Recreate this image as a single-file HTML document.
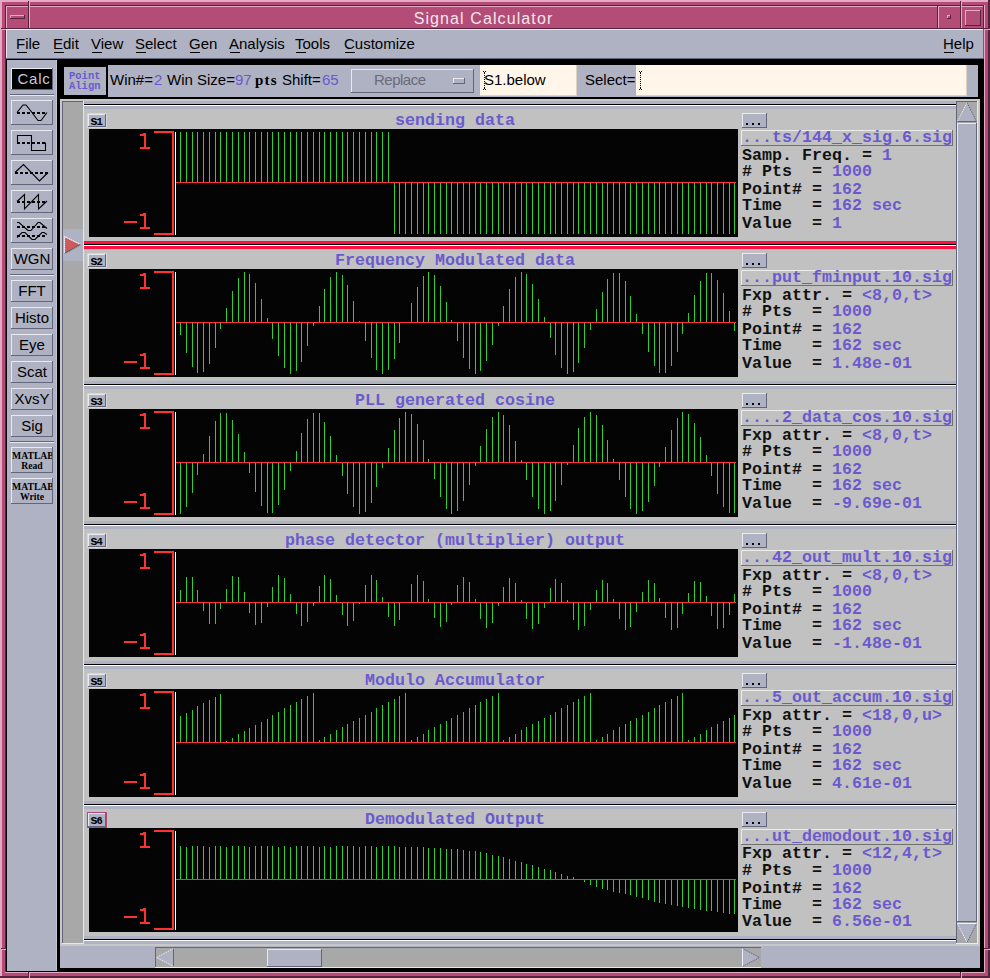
<!DOCTYPE html><html><head><meta charset="utf-8"><style>
html,body{margin:0;padding:0;width:990px;height:978px;overflow:hidden;background:#000}
div,span,svg{position:absolute;box-sizing:border-box}
span{white-space:pre;line-height:1}
</style></head><body>
<div style="left:0px;top:0px;width:990px;height:978px;background:#b34c77;"></div>
<div style="left:0px;top:0px;width:990px;height:2px;background:#e4aac4;"></div>
<div style="left:0px;top:0px;width:2px;height:978px;background:#e4aac4;"></div>
<div style="left:988px;top:0px;width:2px;height:978px;background:#55233b;"></div>
<div style="left:0px;top:976px;width:990px;height:2px;background:#55233b;"></div>
<div style="left:1px;top:976px;width:989px;height:2px;background:#55233b;"></div>
<div style="left:5px;top:5px;width:980px;height:1px;background:#55233b;"></div>
<div style="left:5px;top:5px;width:1px;height:968px;background:#55233b;"></div>
<div style="left:984px;top:5px;width:1px;height:968px;background:#e4aac4;"></div>
<div style="left:5px;top:972px;width:980px;height:1px;background:#e4aac4;"></div>
<div style="left:28px;top:1px;width:1px;height:5px;background:#55233b;"></div>
<div style="left:29px;top:0px;width:1px;height:6px;background:#e4aac4;"></div>
<div style="left:28px;top:972px;width:1px;height:5px;background:#55233b;"></div>
<div style="left:29px;top:972px;width:1px;height:6px;background:#e4aac4;"></div>
<div style="left:960px;top:1px;width:1px;height:5px;background:#55233b;"></div>
<div style="left:961px;top:0px;width:1px;height:6px;background:#e4aac4;"></div>
<div style="left:960px;top:972px;width:1px;height:5px;background:#55233b;"></div>
<div style="left:961px;top:972px;width:1px;height:6px;background:#e4aac4;"></div>
<div style="left:1px;top:28px;width:5px;height:1px;background:#55233b;"></div>
<div style="left:0px;top:29px;width:6px;height:1px;background:#e4aac4;"></div>
<div style="left:984px;top:28px;width:5px;height:1px;background:#55233b;"></div>
<div style="left:984px;top:29px;width:6px;height:1px;background:#e4aac4;"></div>
<div style="left:1px;top:948px;width:5px;height:1px;background:#55233b;"></div>
<div style="left:0px;top:949px;width:6px;height:1px;background:#e4aac4;"></div>
<div style="left:984px;top:948px;width:5px;height:1px;background:#55233b;"></div>
<div style="left:984px;top:949px;width:6px;height:1px;background:#e4aac4;"></div>
<div style="left:6px;top:6px;width:978px;height:966px;background:#000;"></div>
<div style="left:6px;top:6px;width:978px;height:23px;background:#b34c77;"></div>
<div style="left:6px;top:6px;width:23px;height:1px;background:#e4aac4;"></div>
<div style="left:6px;top:6px;width:1px;height:23px;background:#e4aac4;"></div>
<div style="left:6px;top:28px;width:23px;height:1px;background:#55233b;"></div>
<div style="left:28px;top:6px;width:1px;height:23px;background:#55233b;"></div>
<div style="left:29px;top:6px;width:909px;height:1px;background:#e4aac4;"></div>
<div style="left:29px;top:6px;width:1px;height:23px;background:#e4aac4;"></div>
<div style="left:29px;top:28px;width:909px;height:1px;background:#55233b;"></div>
<div style="left:937px;top:6px;width:1px;height:23px;background:#55233b;"></div>
<div style="left:938px;top:6px;width:23px;height:1px;background:#e4aac4;"></div>
<div style="left:938px;top:6px;width:1px;height:23px;background:#e4aac4;"></div>
<div style="left:938px;top:28px;width:23px;height:1px;background:#55233b;"></div>
<div style="left:960px;top:6px;width:1px;height:23px;background:#55233b;"></div>
<div style="left:961px;top:6px;width:23px;height:1px;background:#e4aac4;"></div>
<div style="left:961px;top:6px;width:1px;height:23px;background:#e4aac4;"></div>
<div style="left:961px;top:28px;width:23px;height:1px;background:#55233b;"></div>
<div style="left:983px;top:6px;width:1px;height:23px;background:#55233b;"></div>
<div style="left:10px;top:15px;width:15px;height:1px;background:#e4aac4;"></div>
<div style="left:10px;top:15px;width:1px;height:4px;background:#e4aac4;"></div>
<div style="left:10px;top:18px;width:15px;height:1px;background:#55233b;"></div>
<div style="left:24px;top:15px;width:1px;height:4px;background:#55233b;"></div>
<div style="left:947px;top:15px;width:4px;height:1px;background:#e4aac4;"></div>
<div style="left:947px;top:15px;width:1px;height:4px;background:#e4aac4;"></div>
<div style="left:947px;top:18px;width:4px;height:1px;background:#55233b;"></div>
<div style="left:950px;top:15px;width:1px;height:4px;background:#55233b;"></div>
<div style="left:965px;top:10px;width:16px;height:1px;background:#e4aac4;"></div>
<div style="left:965px;top:10px;width:1px;height:16px;background:#e4aac4;"></div>
<div style="left:965px;top:25px;width:16px;height:1px;background:#55233b;"></div>
<div style="left:980px;top:10px;width:1px;height:16px;background:#55233b;"></div>
<span style="left:0px;width:967px;text-align:center;top:7px;font-family:'Liberation Sans';font-size:16px;line-height:24px;letter-spacing:1.1px;color:#f6e6ee">Signal Calculator</span>
<div style="left:6px;top:29px;width:978px;height:30px;background:#aeb2c3;"></div>
<div style="left:6px;top:29px;width:978px;height:1px;background:#e8eaf0;"></div>
<div style="left:6px;top:29px;width:1px;height:30px;background:#e8eaf0;"></div>
<div style="left:6px;top:58px;width:978px;height:1px;background:#63667a;"></div>
<div style="left:983px;top:29px;width:1px;height:30px;background:#63667a;"></div>
<span style="left:16px;top:35px;font-family:'Liberation Sans';font-size:15px;line-height:18px;color:#000">File</span>
<div style="left:17px;top:52px;width:10px;height:1px;background:#000;"></div>
<span style="left:53px;top:35px;font-family:'Liberation Sans';font-size:15px;line-height:18px;color:#000">Edit</span>
<div style="left:54px;top:52px;width:10px;height:1px;background:#000;"></div>
<span style="left:91px;top:35px;font-family:'Liberation Sans';font-size:15px;line-height:18px;color:#000">View</span>
<div style="left:92px;top:52px;width:10px;height:1px;background:#000;"></div>
<span style="left:135px;top:35px;font-family:'Liberation Sans';font-size:15px;line-height:18px;color:#000">Select</span>
<div style="left:136px;top:52px;width:10px;height:1px;background:#000;"></div>
<span style="left:189px;top:35px;font-family:'Liberation Sans';font-size:15px;line-height:18px;color:#000">Gen</span>
<div style="left:190px;top:52px;width:10px;height:1px;background:#000;"></div>
<span style="left:229px;top:35px;font-family:'Liberation Sans';font-size:15px;line-height:18px;color:#000">Analysis</span>
<div style="left:230px;top:52px;width:10px;height:1px;background:#000;"></div>
<span style="left:295px;top:35px;font-family:'Liberation Sans';font-size:15px;line-height:18px;color:#000">Tools</span>
<div style="left:296px;top:52px;width:10px;height:1px;background:#000;"></div>
<span style="left:344px;top:35px;font-family:'Liberation Sans';font-size:15px;line-height:18px;color:#000">Customize</span>
<div style="left:345px;top:52px;width:10px;height:1px;background:#000;"></div>
<span style="left:943px;top:35px;font-family:'Liberation Sans';font-size:15px;line-height:18px;color:#000">Help</span>
<div style="left:944px;top:52px;width:10px;height:1px;background:#000;"></div>
<div style="left:7px;top:60px;width:50px;height:911px;background:#aeb2c3;"></div>
<div style="left:56px;top:60px;width:1px;height:911px;background:#c2c5d2;"></div>
<div style="left:11px;top:68px;width:42px;height:22px;background:#000;"></div>
<div style="left:11px;top:68px;width:42px;height:1px;background:#e8eaf0;"></div>
<div style="left:11px;top:68px;width:1px;height:22px;background:#e8eaf0;"></div>
<div style="left:11px;top:89px;width:42px;height:1px;background:#63667a;"></div>
<div style="left:52px;top:68px;width:1px;height:22px;background:#63667a;"></div>
<span style="left:13px;width:42px;text-align:center;top:71px;font-family:'Liberation Sans';font-size:15px;line-height:16px;letter-spacing:0.8px;color:#c8c8d6">Calc</span>
<div style="left:10px;top:94px;width:44px;height:1px;background:#63667a;"></div>
<div style="left:10px;top:95px;width:44px;height:1px;background:#e8eaf0;"></div>
<div style="left:10px;top:274px;width:44px;height:1px;background:#63667a;"></div>
<div style="left:10px;top:275px;width:44px;height:1px;background:#e8eaf0;"></div>
<div style="left:10px;top:441px;width:44px;height:1px;background:#63667a;"></div>
<div style="left:10px;top:442px;width:44px;height:1px;background:#e8eaf0;"></div>
<div style="left:11px;top:100px;width:42px;height:25px;background:#aeb2c3;"></div>
<div style="left:11px;top:100px;width:42px;height:1px;background:#e8eaf0;"></div>
<div style="left:11px;top:100px;width:1px;height:25px;background:#e8eaf0;"></div>
<div style="left:11px;top:124px;width:42px;height:1px;background:#63667a;"></div>
<div style="left:52px;top:100px;width:1px;height:25px;background:#63667a;"></div>
<div style="left:11px;top:130px;width:42px;height:25px;background:#aeb2c3;"></div>
<div style="left:11px;top:130px;width:42px;height:1px;background:#e8eaf0;"></div>
<div style="left:11px;top:130px;width:1px;height:25px;background:#e8eaf0;"></div>
<div style="left:11px;top:154px;width:42px;height:1px;background:#63667a;"></div>
<div style="left:52px;top:130px;width:1px;height:25px;background:#63667a;"></div>
<div style="left:11px;top:160px;width:42px;height:25px;background:#aeb2c3;"></div>
<div style="left:11px;top:160px;width:42px;height:1px;background:#e8eaf0;"></div>
<div style="left:11px;top:160px;width:1px;height:25px;background:#e8eaf0;"></div>
<div style="left:11px;top:184px;width:42px;height:1px;background:#63667a;"></div>
<div style="left:52px;top:160px;width:1px;height:25px;background:#63667a;"></div>
<div style="left:11px;top:190px;width:42px;height:23px;background:#aeb2c3;"></div>
<div style="left:11px;top:190px;width:42px;height:1px;background:#e8eaf0;"></div>
<div style="left:11px;top:190px;width:1px;height:23px;background:#e8eaf0;"></div>
<div style="left:11px;top:212px;width:42px;height:1px;background:#63667a;"></div>
<div style="left:52px;top:190px;width:1px;height:23px;background:#63667a;"></div>
<div style="left:11px;top:218px;width:42px;height:25px;background:#aeb2c3;"></div>
<div style="left:11px;top:218px;width:42px;height:1px;background:#e8eaf0;"></div>
<div style="left:11px;top:218px;width:1px;height:25px;background:#e8eaf0;"></div>
<div style="left:11px;top:242px;width:42px;height:1px;background:#63667a;"></div>
<div style="left:52px;top:218px;width:1px;height:25px;background:#63667a;"></div>
<div style="left:11px;top:248px;width:42px;height:22px;background:#aeb2c3;"></div>
<div style="left:11px;top:248px;width:42px;height:1px;background:#e8eaf0;"></div>
<div style="left:11px;top:248px;width:1px;height:22px;background:#e8eaf0;"></div>
<div style="left:11px;top:269px;width:42px;height:1px;background:#63667a;"></div>
<div style="left:52px;top:248px;width:1px;height:22px;background:#63667a;"></div>
<span style="left:11px;width:42px;text-align:center;top:251px;font-family:'Liberation Sans';font-size:15px;line-height:16px;color:#000">WGN</span>
<div style="left:11px;top:280px;width:42px;height:22px;background:#aeb2c3;"></div>
<div style="left:11px;top:280px;width:42px;height:1px;background:#e8eaf0;"></div>
<div style="left:11px;top:280px;width:1px;height:22px;background:#e8eaf0;"></div>
<div style="left:11px;top:301px;width:42px;height:1px;background:#63667a;"></div>
<div style="left:52px;top:280px;width:1px;height:22px;background:#63667a;"></div>
<span style="left:11px;width:42px;text-align:center;top:283px;font-family:'Liberation Sans';font-size:15px;line-height:16px;color:#000">FFT</span>
<div style="left:11px;top:307px;width:42px;height:22px;background:#aeb2c3;"></div>
<div style="left:11px;top:307px;width:42px;height:1px;background:#e8eaf0;"></div>
<div style="left:11px;top:307px;width:1px;height:22px;background:#e8eaf0;"></div>
<div style="left:11px;top:328px;width:42px;height:1px;background:#63667a;"></div>
<div style="left:52px;top:307px;width:1px;height:22px;background:#63667a;"></div>
<span style="left:11px;width:42px;text-align:center;top:310px;font-family:'Liberation Sans';font-size:15px;line-height:16px;color:#000">Histo</span>
<div style="left:11px;top:334px;width:42px;height:22px;background:#aeb2c3;"></div>
<div style="left:11px;top:334px;width:42px;height:1px;background:#e8eaf0;"></div>
<div style="left:11px;top:334px;width:1px;height:22px;background:#e8eaf0;"></div>
<div style="left:11px;top:355px;width:42px;height:1px;background:#63667a;"></div>
<div style="left:52px;top:334px;width:1px;height:22px;background:#63667a;"></div>
<span style="left:11px;width:42px;text-align:center;top:337px;font-family:'Liberation Sans';font-size:15px;line-height:16px;color:#000">Eye</span>
<div style="left:11px;top:361px;width:42px;height:22px;background:#aeb2c3;"></div>
<div style="left:11px;top:361px;width:42px;height:1px;background:#e8eaf0;"></div>
<div style="left:11px;top:361px;width:1px;height:22px;background:#e8eaf0;"></div>
<div style="left:11px;top:382px;width:42px;height:1px;background:#63667a;"></div>
<div style="left:52px;top:361px;width:1px;height:22px;background:#63667a;"></div>
<span style="left:11px;width:42px;text-align:center;top:364px;font-family:'Liberation Sans';font-size:15px;line-height:16px;color:#000">Scat</span>
<div style="left:11px;top:388px;width:42px;height:22px;background:#aeb2c3;"></div>
<div style="left:11px;top:388px;width:42px;height:1px;background:#e8eaf0;"></div>
<div style="left:11px;top:388px;width:1px;height:22px;background:#e8eaf0;"></div>
<div style="left:11px;top:409px;width:42px;height:1px;background:#63667a;"></div>
<div style="left:52px;top:388px;width:1px;height:22px;background:#63667a;"></div>
<span style="left:11px;width:42px;text-align:center;top:391px;font-family:'Liberation Sans';font-size:15px;line-height:16px;color:#000">XvsY</span>
<div style="left:11px;top:415px;width:42px;height:22px;background:#aeb2c3;"></div>
<div style="left:11px;top:415px;width:42px;height:1px;background:#e8eaf0;"></div>
<div style="left:11px;top:415px;width:1px;height:22px;background:#e8eaf0;"></div>
<div style="left:11px;top:436px;width:42px;height:1px;background:#63667a;"></div>
<div style="left:52px;top:415px;width:1px;height:22px;background:#63667a;"></div>
<span style="left:11px;width:42px;text-align:center;top:418px;font-family:'Liberation Sans';font-size:15px;line-height:16px;color:#000">Sig</span>
<div style="left:11px;top:447px;width:42px;height:26px;background:#aeb2c3;"></div>
<div style="left:11px;top:447px;width:42px;height:1px;background:#e8eaf0;"></div>
<div style="left:11px;top:447px;width:1px;height:26px;background:#e8eaf0;"></div>
<div style="left:11px;top:472px;width:42px;height:1px;background:#63667a;"></div>
<div style="left:52px;top:447px;width:1px;height:26px;background:#63667a;"></div>
<div style="left:12px;top:448px;width:40px;height:24px;overflow:hidden"><span style="left:0px;top:3px;font-family:'Liberation Serif';font-weight:bold;font-size:9.7px;letter-spacing:0px;color:#000">MATLAB</span><span style="left:0;width:40px;text-align:center;top:13px;font-family:'Liberation Serif';font-weight:bold;font-size:9.7px;letter-spacing:0px;color:#000">Read</span></div>
<div style="left:11px;top:478px;width:42px;height:26px;background:#aeb2c3;"></div>
<div style="left:11px;top:478px;width:42px;height:1px;background:#e8eaf0;"></div>
<div style="left:11px;top:478px;width:1px;height:26px;background:#e8eaf0;"></div>
<div style="left:11px;top:503px;width:42px;height:1px;background:#63667a;"></div>
<div style="left:52px;top:478px;width:1px;height:26px;background:#63667a;"></div>
<div style="left:12px;top:479px;width:40px;height:24px;overflow:hidden"><span style="left:0px;top:3px;font-family:'Liberation Serif';font-weight:bold;font-size:9.7px;letter-spacing:0px;color:#000">MATLAB</span><span style="left:0;width:40px;text-align:center;top:13px;font-family:'Liberation Serif';font-weight:bold;font-size:9.7px;letter-spacing:0px;color:#000">Write</span></div>
<svg style="left:0;top:0" width="60" height="250" shape-rendering="crispEdges">
<rect x="17" y="112" width="3" height="1.6" fill="#000"/>
<rect x="22" y="112" width="3" height="1.6" fill="#000"/>
<rect x="27" y="112" width="3" height="1.6" fill="#000"/>
<rect x="32" y="112" width="3" height="1.6" fill="#000"/>
<rect x="37" y="112" width="3" height="1.6" fill="#000"/>
<rect x="42" y="112" width="3" height="1.6" fill="#000"/>
<polyline fill="none" stroke="#000" stroke-width="1.1" shape-rendering="auto" points="17,112.5 23,105 26,105 32,112.5 38,120.5 41,120.5 47,112.5"/>
<rect x="17" y="142" width="3" height="1.6" fill="#000"/>
<rect x="22" y="142" width="3" height="1.6" fill="#000"/>
<rect x="27" y="142" width="3" height="1.6" fill="#000"/>
<rect x="32" y="142" width="3" height="1.6" fill="#000"/>
<rect x="37" y="142" width="3" height="1.6" fill="#000"/>
<rect x="42" y="142" width="3" height="1.6" fill="#000"/>
<path d="M17.5,142.5 V135.5 H31.5 V150.5 H45.5 V142.5" fill="none" stroke="#000" stroke-width="1.1" shape-rendering="auto"/>
<rect x="15" y="172" width="3" height="1.6" fill="#000"/>
<rect x="20" y="172" width="3" height="1.6" fill="#000"/>
<rect x="25" y="172" width="3" height="1.6" fill="#000"/>
<rect x="30" y="172" width="3" height="1.6" fill="#000"/>
<rect x="35" y="172" width="3" height="1.6" fill="#000"/>
<rect x="40" y="172" width="3" height="1.6" fill="#000"/>
<rect x="45" y="172" width="3" height="1.6" fill="#000"/>
<polyline fill="none" stroke="#000" stroke-width="1.1" shape-rendering="auto" points="15,172.5 23.5,164.5 39.5,181 48,172.5"/>
<rect x="17" y="201" width="3" height="1.6" fill="#000"/>
<rect x="22" y="201" width="3" height="1.6" fill="#000"/>
<rect x="27" y="201" width="3" height="1.6" fill="#000"/>
<rect x="32" y="201" width="3" height="1.6" fill="#000"/>
<rect x="37" y="201" width="3" height="1.6" fill="#000"/>
<rect x="42" y="201" width="3" height="1.6" fill="#000"/>
<polyline fill="none" stroke="#000" stroke-width="1.1" shape-rendering="auto" points="17,201.5 24.5,194.5 24.5,209 38.5,194.5 38.5,209 47,201"/>
<rect x="17" y="226" width="3" height="1.6" fill="#000"/>
<rect x="22" y="226" width="3" height="1.6" fill="#000"/>
<rect x="27" y="226" width="3" height="1.6" fill="#000"/>
<rect x="32" y="226" width="3" height="1.6" fill="#000"/>
<rect x="37" y="226" width="3" height="1.6" fill="#000"/>
<rect x="42" y="226" width="3" height="1.6" fill="#000"/>
<rect x="17" y="235" width="3" height="1.6" fill="#000"/>
<rect x="22" y="235" width="3" height="1.6" fill="#000"/>
<rect x="27" y="235" width="3" height="1.6" fill="#000"/>
<rect x="32" y="235" width="3" height="1.6" fill="#000"/>
<rect x="37" y="235" width="3" height="1.6" fill="#000"/>
<rect x="42" y="235" width="3" height="1.6" fill="#000"/>
<polyline fill="none" stroke="#000" stroke-width="1.1" shape-rendering="auto" points="17,222.5 19,222.5 28,230.5 31,230.5 38,222.5 40,222.5 47,228.5"/>
<polyline fill="none" stroke="#000" stroke-width="1.1" shape-rendering="auto" points="17,237.5 22,232.5 25,232.5 32,239.5 35,239.5 42,232.5 44,232.5 47,234.5"/>
</svg>
<div style="left:64px;top:67px;width:42px;height:28px;background:#aeb2c3;"></div>
<span style="left:69px;top:71px;font-family:'Liberation Mono';font-weight:bold;font-size:10.5px;line-height:10px;color:#6a5acd">Point
Align</span>
<div style="left:108px;top:65px;width:870px;height:32px;background:#aeb2c3;"></div>
<span style="left:110px;top:72px;font-family:'Liberation Sans';font-size:15px;font-weight:normal;line-height:16px;color:#000">Win#=</span>
<span style="left:154px;top:72px;font-family:'Liberation Sans';font-size:15px;font-weight:normal;line-height:16px;color:#6a5acd">2</span>
<span style="left:167px;top:72px;font-family:'Liberation Sans';font-size:15px;font-weight:normal;line-height:16px;color:#000">Win Size=</span>
<span style="left:235px;top:72px;font-family:'Liberation Sans';font-size:15px;font-weight:normal;line-height:16px;color:#6a5acd">97</span>
<span style="left:255px;top:72px;font-family:'Liberation Serif';font-size:15px;font-weight:bold;line-height:16px;letter-spacing:1.2px;color:#000">pts</span>
<span style="left:282px;top:72px;font-family:'Liberation Sans';font-size:15px;font-weight:normal;line-height:16px;color:#000">Shift=</span>
<span style="left:322px;top:72px;font-family:'Liberation Sans';font-size:15px;font-weight:normal;line-height:16px;color:#6a5acd">65</span>
<div style="left:351px;top:69px;width:123px;height:24px;background:#aeb2c3;"></div>
<div style="left:351px;top:69px;width:123px;height:1px;background:#e8eaf0;"></div>
<div style="left:351px;top:69px;width:1px;height:24px;background:#e8eaf0;"></div>
<div style="left:351px;top:92px;width:123px;height:1px;background:#63667a;"></div>
<div style="left:473px;top:69px;width:1px;height:24px;background:#63667a;"></div>
<span style="left:374px;top:72px;font-family:'Liberation Sans';font-size:15px;line-height:16px;letter-spacing:-0.5px;color:#6a6c78">Replace</span>
<div style="left:453px;top:78px;width:12px;height:6px;background:#aeb2c3;"></div>
<div style="left:453px;top:78px;width:12px;height:1px;background:#e8eaf0;"></div>
<div style="left:453px;top:78px;width:1px;height:6px;background:#e8eaf0;"></div>
<div style="left:453px;top:83px;width:12px;height:1px;background:#63667a;"></div>
<div style="left:464px;top:78px;width:1px;height:6px;background:#63667a;"></div>
<div style="left:480px;top:65px;width:97px;height:31px;background:#fff6e9;"></div>
<div style="left:484px;top:73px;width:1px;height:1px;background:#000;"></div>
<div style="left:484px;top:75px;width:1px;height:1px;background:#000;"></div>
<div style="left:484px;top:77px;width:1px;height:1px;background:#000;"></div>
<div style="left:484px;top:79px;width:1px;height:1px;background:#000;"></div>
<div style="left:484px;top:81px;width:1px;height:1px;background:#000;"></div>
<div style="left:484px;top:83px;width:1px;height:1px;background:#000;"></div>
<div style="left:484px;top:85px;width:1px;height:1px;background:#000;"></div>
<div style="left:484px;top:87px;width:1px;height:1px;background:#000;"></div>
<div style="left:483px;top:71px;width:1px;height:1px;background:#000;"></div>
<div style="left:485px;top:71px;width:1px;height:1px;background:#000;"></div>
<div style="left:484px;top:72px;width:1px;height:1px;background:#000;"></div>
<div style="left:484px;top:88px;width:1px;height:1px;background:#000;"></div>
<div style="left:483px;top:89px;width:1px;height:1px;background:#000;"></div>
<div style="left:485px;top:89px;width:1px;height:1px;background:#000;"></div>
<div style="left:479px;top:65px;width:1px;height:31px;background:#b8b0a0;"></div>
<span style="left:484px;top:72px;font-family:'Liberation Sans';font-size:15px;font-weight:normal;line-height:16px;color:#000">S1.below</span>
<span style="left:585px;top:72px;font-family:'Liberation Sans';font-size:15px;font-weight:normal;line-height:16px;color:#000">Select=</span>
<div style="left:636px;top:65px;width:331px;height:31px;background:#fff6e9;"></div>
<div style="left:576px;top:65px;width:1px;height:31px;background:#ddd3c0;"></div>
<div style="left:480px;top:95px;width:97px;height:1px;background:#ddd3c0;"></div>
<div style="left:966px;top:65px;width:1px;height:31px;background:#ddd3c0;"></div>
<div style="left:636px;top:95px;width:331px;height:1px;background:#ddd3c0;"></div>
<div style="left:640px;top:73px;width:1px;height:1px;background:#000;"></div>
<div style="left:640px;top:75px;width:1px;height:1px;background:#000;"></div>
<div style="left:640px;top:77px;width:1px;height:1px;background:#000;"></div>
<div style="left:640px;top:79px;width:1px;height:1px;background:#000;"></div>
<div style="left:640px;top:81px;width:1px;height:1px;background:#000;"></div>
<div style="left:640px;top:83px;width:1px;height:1px;background:#000;"></div>
<div style="left:640px;top:85px;width:1px;height:1px;background:#000;"></div>
<div style="left:640px;top:87px;width:1px;height:1px;background:#000;"></div>
<div style="left:639px;top:71px;width:1px;height:1px;background:#000;"></div>
<div style="left:641px;top:71px;width:1px;height:1px;background:#000;"></div>
<div style="left:640px;top:72px;width:1px;height:1px;background:#000;"></div>
<div style="left:640px;top:88px;width:1px;height:1px;background:#000;"></div>
<div style="left:639px;top:89px;width:1px;height:1px;background:#000;"></div>
<div style="left:641px;top:89px;width:1px;height:1px;background:#000;"></div>
<div style="left:635px;top:65px;width:1px;height:31px;background:#b8b0a0;"></div>
<div style="left:60px;top:99px;width:920px;height:869px;background:#c8c8c8;"></div>
<div style="left:62px;top:101px;width:894px;height:843px;background:#c1c1c1;"></div>
<div style="left:62px;top:101px;width:22px;height:843px;background:#a8a8a8;"></div>
<div style="left:62px;top:101px;width:22px;height:1px;background:#63667a;"></div>
<div style="left:62px;top:101px;width:1px;height:843px;background:#63667a;"></div>
<div style="left:83px;top:101px;width:1px;height:843px;background:#e6e6e6;"></div>
<div style="left:62px;top:943px;width:22px;height:1px;background:#e6e6e6;"></div>
<div style="left:63px;top:229px;width:20px;height:32px;background:#aeb2c3;"></div>
<svg style="left:60px;top:230px" width="24" height="30"><polygon points="5,7 20,14.5 5,23" fill="#cd5a5a"/><polyline points="4.5,23.5 4.5,6.5 20.5,14.5" fill="none" stroke="#eef" stroke-width="1.2" stroke-dasharray="1.5,0.5"/><polyline points="20.5,14.5 4.5,23.5" fill="none" stroke="#555" stroke-width="1.2" stroke-dasharray="1.5,0.5"/></svg>
<div style="left:60px;top:946px;width:920px;height:22px;background:#aeb2c3;"></div>
<div style="left:60px;top:944px;width:920px;height:2px;background:#c8c8c8;"></div>
<div style="left:155px;top:947px;width:606px;height:21px;background:#a8a8a8;"></div>
<div style="left:155px;top:947px;width:606px;height:1px;background:#63667a;"></div>
<div style="left:155px;top:947px;width:1px;height:21px;background:#63667a;"></div>
<div style="left:155px;top:967px;width:606px;height:1px;background:#e8eaf0;"></div>
<div style="left:156px;top:948px;width:18px;height:19px;background:#a8a8a8;"></div>
<svg style="left:155px;top:947px" width="20" height="21"><polygon points="1.5,10.5 18.5,1.5 18.5,19.5" fill="#aeb2c3"/><polyline points="18.5,1.5 1.5,10.5 18.5,19.5" fill="none" stroke="#eef" stroke-width="1" stroke-dasharray="1.5,1"/><polyline points="18.5,1.5 18.5,19.5" stroke="#63667a" stroke-width="1"/></svg>
<svg style="left:741px;top:947px" width="20" height="21"><polygon points="1.5,1.5 18.5,10.5 1.5,19.5" fill="#aeb2c3"/><polyline points="1.5,19.5 18.5,10.5 1.5,1.5" fill="none" stroke="#63667a" stroke-width="1" stroke-dasharray="1.5,1"/><polyline points="1.5,1.5 1.5,19.5" stroke="#eef" stroke-width="1"/></svg>
<div style="left:267px;top:949px;width:55px;height:18px;background:#aeb2c3;"></div>
<div style="left:267px;top:949px;width:55px;height:1px;background:#e8eaf0;"></div>
<div style="left:267px;top:949px;width:1px;height:18px;background:#e8eaf0;"></div>
<div style="left:267px;top:966px;width:55px;height:1px;background:#63667a;"></div>
<div style="left:321px;top:949px;width:1px;height:18px;background:#63667a;"></div>
<div style="left:956px;top:101px;width:22px;height:843px;background:#a8a8a8;"></div>
<div style="left:956px;top:101px;width:22px;height:1px;background:#63667a;"></div>
<div style="left:956px;top:101px;width:1px;height:843px;background:#63667a;"></div>
<div style="left:977px;top:101px;width:1px;height:843px;background:#e8eaf0;"></div>
<div style="left:956px;top:943px;width:22px;height:1px;background:#e8eaf0;"></div>
<svg style="left:956px;top:101px" width="22" height="22"><polygon points="11,1.5 20.5,20.5 1.5,20.5" fill="#aeb2c3"/><polyline points="1.5,20.5 11,1.5" fill="none" stroke="#eef" stroke-width="1" stroke-dasharray="1.5,1"/><polyline points="11,1.5 20.5,20.5" fill="none" stroke="#63667a" stroke-width="1" stroke-dasharray="1.5,1"/><polyline points="1.5,20.5 20.5,20.5" stroke="#63667a" stroke-width="1"/></svg>
<svg style="left:956px;top:922px" width="22" height="22"><polygon points="1.5,1.5 20.5,1.5 11,20.5" fill="#aeb2c3"/><polyline points="1.5,1.5 11,20.5" fill="none" stroke="#eef" stroke-width="1" stroke-dasharray="1.5,1"/><polyline points="11,20.5 20.5,1.5" fill="none" stroke="#63667a" stroke-width="1" stroke-dasharray="1.5,1"/><polyline points="1.5,1.5 20.5,1.5" stroke="#eef" stroke-width="1"/></svg>
<div style="left:957px;top:123px;width:20px;height:799px;background:#aeb2c3;"></div>
<div style="left:957px;top:123px;width:20px;height:1px;background:#e8eaf0;"></div>
<div style="left:957px;top:123px;width:1px;height:799px;background:#e8eaf0;"></div>
<div style="left:957px;top:921px;width:20px;height:1px;background:#63667a;"></div>
<div style="left:976px;top:123px;width:1px;height:799px;background:#63667a;"></div>
<div style="left:84px;top:936px;width:872px;height:3px;background:#aeb2c3;"></div>
<div style="left:84px;top:939px;width:872px;height:1px;background:#000;"></div>
<div style="left:84px;top:940px;width:872px;height:1px;background:#fff;"></div>
<div style="left:84px;top:941px;width:872px;height:3px;background:#aeb2c3;"></div>
<div style="left:84px;top:101px;width:872px;height:3px;background:#aeb2c3;"></div>
<div style="left:84px;top:104px;width:872px;height:1px;background:#000;"></div>
<div style="left:84px;top:105px;width:872px;height:1px;background:#fff;"></div>
<div style="left:84px;top:106px;width:872px;height:3px;background:#aeb2c3;"></div>
<div style="left:87px;top:113px;width:20px;height:15px;background:#d4d6de;"></div>
<div style="left:88px;top:114px;width:18px;height:13px;background:#aeb2c3;"></div>
<div style="left:88px;top:114px;width:18px;height:1px;background:#e8eaf0;"></div>
<div style="left:88px;top:114px;width:1px;height:13px;background:#e8eaf0;"></div>
<div style="left:88px;top:126px;width:18px;height:1px;background:#63667a;"></div>
<div style="left:105px;top:114px;width:1px;height:13px;background:#63667a;"></div>
<span style="left:90px;top:116.5px;font-family:'Liberation Mono';font-weight:bold;font-size:13px;line-height:10px;color:#000;letter-spacing:-1.2px">s<span style="position:static;font-size:10.5px">1</span></span>
<span style="left:173px;width:564px;text-align:center;top:113px;font-family:'Liberation Mono';font-weight:bold;font-size:16.67px;line-height:16px;color:#6a5acd">sending data</span>
<div style="left:89px;top:129px;width:649px;height:108px;background:#040404;"></div>
<svg style="left:0;top:0" width="990" height="978" shape-rendering="crispEdges">
<rect x="154" y="131" width="20" height="2" fill="#ff3232"/>
<rect x="154" y="233" width="20" height="2" fill="#ff3232"/>
<rect x="172" y="131" width="2" height="104" fill="#ff3232"/>
<rect x="144" y="133" width="2" height="15" fill="#ff3232"/>
<rect x="140" y="134" width="4" height="2" fill="#ff3232"/>
<rect x="143" y="133" width="1" height="1" fill="#ff3232"/>
<rect x="140" y="147" width="10" height="2" fill="#ff3232"/>
<rect x="144" y="213" width="2" height="15" fill="#ff3232"/>
<rect x="140" y="214" width="4" height="2" fill="#ff3232"/>
<rect x="143" y="213" width="1" height="1" fill="#ff3232"/>
<rect x="140" y="227" width="10" height="2" fill="#ff3232"/>
<rect x="124" y="221" width="13" height="2" fill="#ff3232"/>
<rect x="180" y="132" width="1" height="51" fill="#32cd32"/>
<rect x="186" y="132" width="1" height="51" fill="#32cd32"/>
<rect x="192" y="132" width="1" height="51" fill="#32cd32"/>
<rect x="197" y="132" width="1" height="51" fill="#32cd32"/>
<rect x="203" y="132" width="1" height="51" fill="#32cd32"/>
<rect x="209" y="132" width="1" height="51" fill="#32cd32"/>
<rect x="215" y="132" width="1" height="51" fill="#32cd32"/>
<rect x="220" y="132" width="1" height="51" fill="#32cd32"/>
<rect x="226" y="132" width="1" height="51" fill="#32cd32"/>
<rect x="232" y="132" width="1" height="51" fill="#32cd32"/>
<rect x="238" y="132" width="1" height="51" fill="#32cd32"/>
<rect x="244" y="132" width="1" height="51" fill="#32cd32"/>
<rect x="249" y="132" width="1" height="51" fill="#32cd32"/>
<rect x="255" y="132" width="1" height="51" fill="#32cd32"/>
<rect x="261" y="132" width="1" height="51" fill="#32cd32"/>
<rect x="267" y="132" width="1" height="51" fill="#32cd32"/>
<rect x="272" y="132" width="1" height="51" fill="#32cd32"/>
<rect x="278" y="132" width="1" height="51" fill="#32cd32"/>
<rect x="284" y="132" width="1" height="51" fill="#32cd32"/>
<rect x="290" y="132" width="1" height="51" fill="#32cd32"/>
<rect x="296" y="132" width="1" height="51" fill="#32cd32"/>
<rect x="301" y="132" width="1" height="51" fill="#32cd32"/>
<rect x="307" y="132" width="1" height="51" fill="#32cd32"/>
<rect x="313" y="132" width="1" height="51" fill="#32cd32"/>
<rect x="319" y="132" width="1" height="51" fill="#32cd32"/>
<rect x="324" y="132" width="1" height="51" fill="#32cd32"/>
<rect x="330" y="132" width="1" height="51" fill="#32cd32"/>
<rect x="336" y="132" width="1" height="51" fill="#32cd32"/>
<rect x="342" y="132" width="1" height="51" fill="#32cd32"/>
<rect x="347" y="132" width="1" height="51" fill="#32cd32"/>
<rect x="353" y="132" width="1" height="51" fill="#32cd32"/>
<rect x="359" y="132" width="1" height="51" fill="#32cd32"/>
<rect x="365" y="132" width="1" height="51" fill="#32cd32"/>
<rect x="371" y="132" width="1" height="51" fill="#32cd32"/>
<rect x="376" y="132" width="1" height="51" fill="#32cd32"/>
<rect x="382" y="132" width="1" height="51" fill="#32cd32"/>
<rect x="388" y="132" width="1" height="51" fill="#32cd32"/>
<rect x="394" y="182" width="1" height="52" fill="#32cd32"/>
<rect x="399" y="182" width="1" height="52" fill="#32cd32"/>
<rect x="405" y="182" width="1" height="52" fill="#32cd32"/>
<rect x="411" y="182" width="1" height="52" fill="#32cd32"/>
<rect x="417" y="182" width="1" height="52" fill="#32cd32"/>
<rect x="423" y="182" width="1" height="52" fill="#32cd32"/>
<rect x="428" y="182" width="1" height="52" fill="#32cd32"/>
<rect x="434" y="182" width="1" height="52" fill="#32cd32"/>
<rect x="440" y="182" width="1" height="52" fill="#32cd32"/>
<rect x="446" y="182" width="1" height="52" fill="#32cd32"/>
<rect x="451" y="182" width="1" height="52" fill="#32cd32"/>
<rect x="457" y="182" width="1" height="52" fill="#32cd32"/>
<rect x="463" y="182" width="1" height="52" fill="#32cd32"/>
<rect x="469" y="182" width="1" height="52" fill="#32cd32"/>
<rect x="475" y="182" width="1" height="52" fill="#32cd32"/>
<rect x="480" y="182" width="1" height="52" fill="#32cd32"/>
<rect x="486" y="182" width="1" height="52" fill="#32cd32"/>
<rect x="492" y="182" width="1" height="52" fill="#32cd32"/>
<rect x="498" y="182" width="1" height="52" fill="#32cd32"/>
<rect x="503" y="182" width="1" height="52" fill="#32cd32"/>
<rect x="509" y="182" width="1" height="52" fill="#32cd32"/>
<rect x="515" y="182" width="1" height="52" fill="#32cd32"/>
<rect x="521" y="182" width="1" height="52" fill="#32cd32"/>
<rect x="526" y="182" width="1" height="52" fill="#32cd32"/>
<rect x="532" y="182" width="1" height="52" fill="#32cd32"/>
<rect x="538" y="182" width="1" height="52" fill="#32cd32"/>
<rect x="544" y="182" width="1" height="52" fill="#32cd32"/>
<rect x="550" y="182" width="1" height="52" fill="#32cd32"/>
<rect x="555" y="182" width="1" height="52" fill="#32cd32"/>
<rect x="561" y="182" width="1" height="52" fill="#32cd32"/>
<rect x="567" y="182" width="1" height="52" fill="#32cd32"/>
<rect x="573" y="182" width="1" height="52" fill="#32cd32"/>
<rect x="578" y="182" width="1" height="52" fill="#32cd32"/>
<rect x="584" y="182" width="1" height="52" fill="#32cd32"/>
<rect x="590" y="182" width="1" height="52" fill="#32cd32"/>
<rect x="596" y="182" width="1" height="52" fill="#32cd32"/>
<rect x="602" y="182" width="1" height="52" fill="#32cd32"/>
<rect x="607" y="182" width="1" height="52" fill="#32cd32"/>
<rect x="613" y="182" width="1" height="52" fill="#32cd32"/>
<rect x="619" y="182" width="1" height="52" fill="#32cd32"/>
<rect x="625" y="182" width="1" height="52" fill="#32cd32"/>
<rect x="630" y="182" width="1" height="52" fill="#32cd32"/>
<rect x="636" y="182" width="1" height="52" fill="#32cd32"/>
<rect x="642" y="182" width="1" height="52" fill="#32cd32"/>
<rect x="648" y="182" width="1" height="52" fill="#32cd32"/>
<rect x="654" y="182" width="1" height="52" fill="#32cd32"/>
<rect x="659" y="182" width="1" height="52" fill="#32cd32"/>
<rect x="665" y="182" width="1" height="52" fill="#32cd32"/>
<rect x="671" y="182" width="1" height="52" fill="#32cd32"/>
<rect x="677" y="182" width="1" height="52" fill="#32cd32"/>
<rect x="682" y="182" width="1" height="52" fill="#32cd32"/>
<rect x="688" y="182" width="1" height="52" fill="#32cd32"/>
<rect x="694" y="182" width="1" height="52" fill="#32cd32"/>
<rect x="700" y="182" width="1" height="52" fill="#32cd32"/>
<rect x="706" y="182" width="1" height="52" fill="#32cd32"/>
<rect x="711" y="182" width="1" height="52" fill="#32cd32"/>
<rect x="717" y="182" width="1" height="52" fill="#32cd32"/>
<rect x="723" y="182" width="1" height="52" fill="#32cd32"/>
<rect x="729" y="182" width="1" height="52" fill="#32cd32"/>
<rect x="734" y="182" width="1" height="52" fill="#32cd32"/>
<rect x="175" y="182" width="561" height="1" fill="#ff3232"/>
<rect x="175" y="132" width="1" height="103" fill="#fff"/>
</svg>
<div style="left:742px;top:113px;width:25px;height:15px;background:#aeb2c3;"></div>
<div style="left:742px;top:113px;width:25px;height:1px;background:#e8eaf0;"></div>
<div style="left:742px;top:113px;width:1px;height:15px;background:#e8eaf0;"></div>
<div style="left:742px;top:127px;width:25px;height:1px;background:#63667a;"></div>
<div style="left:766px;top:113px;width:1px;height:15px;background:#63667a;"></div>
<div style="left:746px;top:123px;width:2px;height:2px;background:#000;"></div>
<div style="left:752px;top:123px;width:2px;height:2px;background:#000;"></div>
<div style="left:758px;top:123px;width:2px;height:2px;background:#000;"></div>
<div style="left:741px;top:130px;width:212px;height:16px;background:#c1c1c1;"></div>
<div style="left:741px;top:130px;width:212px;height:1px;background:#ececec;"></div>
<div style="left:741px;top:130px;width:1px;height:16px;background:#ececec;"></div>
<div style="left:741px;top:145px;width:212px;height:1px;background:#707070;"></div>
<div style="left:952px;top:130px;width:1px;height:16px;background:#707070;"></div>
<span style="left:742px;top:130px;font-family:'Liberation Mono';font-weight:bold;font-size:16.67px;line-height:16px;color:#6a5acd">...ts/144_x_sig.6.sig</span>
<span style="left:742px;top:147.75px;font-family:'Liberation Mono';font-weight:bold;font-size:16.67px;line-height:16px;color:#111">Samp. Freq. = <span style="position:static;color:#6a5acd">1</span></span>
<span style="left:742px;top:164.4px;font-family:'Liberation Mono';font-weight:bold;font-size:16.67px;line-height:16px;color:#111"># Pts  = <span style="position:static;color:#6a5acd">1000</span></span>
<span style="left:742px;top:182.3px;font-family:'Liberation Mono';font-weight:bold;font-size:16.67px;line-height:16px;color:#111">Point# = <span style="position:static;color:#6a5acd">162</span></span>
<span style="left:742px;top:198px;font-family:'Liberation Mono';font-weight:bold;font-size:16.67px;line-height:16px;color:#111">Time   = <span style="position:static;color:#6a5acd">162 sec</span></span>
<span style="left:742px;top:215.5px;font-family:'Liberation Mono';font-weight:bold;font-size:16.67px;line-height:16px;color:#111">Value  = <span style="position:static;color:#6a5acd">1</span></span>
<div style="left:84px;top:241px;width:872px;height:3px;background:#ff1040;"></div>
<div style="left:84px;top:244px;width:872px;height:1px;background:#000;"></div>
<div style="left:84px;top:245px;width:872px;height:1px;background:#fff;"></div>
<div style="left:84px;top:246px;width:872px;height:3px;background:#ff1040;"></div>
<div style="left:84px;top:241px;width:872px;height:8px;background:#ff1040;"></div>
<div style="left:84px;top:244px;width:872px;height:1px;background:#000;"></div>
<div style="left:84px;top:245px;width:872px;height:1px;background:#fff;"></div>
<div style="left:87px;top:253px;width:20px;height:15px;background:#d4d6de;"></div>
<div style="left:88px;top:254px;width:18px;height:13px;background:#aeb2c3;"></div>
<div style="left:88px;top:254px;width:18px;height:1px;background:#e8eaf0;"></div>
<div style="left:88px;top:254px;width:1px;height:13px;background:#e8eaf0;"></div>
<div style="left:88px;top:266px;width:18px;height:1px;background:#63667a;"></div>
<div style="left:105px;top:254px;width:1px;height:13px;background:#63667a;"></div>
<span style="left:90px;top:256.5px;font-family:'Liberation Mono';font-weight:bold;font-size:13px;line-height:10px;color:#000;letter-spacing:-1.2px">s<span style="position:static;font-size:10.5px">2</span></span>
<span style="left:173px;width:564px;text-align:center;top:253px;font-family:'Liberation Mono';font-weight:bold;font-size:16.67px;line-height:16px;color:#6a5acd">Frequency Modulated data</span>
<div style="left:89px;top:269px;width:649px;height:108px;background:#040404;"></div>
<svg style="left:0;top:0" width="990" height="978" shape-rendering="crispEdges">
<rect x="154" y="271" width="20" height="2" fill="#ff3232"/>
<rect x="154" y="373" width="20" height="2" fill="#ff3232"/>
<rect x="172" y="271" width="2" height="104" fill="#ff3232"/>
<rect x="144" y="273" width="2" height="15" fill="#ff3232"/>
<rect x="140" y="274" width="4" height="2" fill="#ff3232"/>
<rect x="143" y="273" width="1" height="1" fill="#ff3232"/>
<rect x="140" y="287" width="10" height="2" fill="#ff3232"/>
<rect x="144" y="353" width="2" height="15" fill="#ff3232"/>
<rect x="140" y="354" width="4" height="2" fill="#ff3232"/>
<rect x="143" y="353" width="1" height="1" fill="#ff3232"/>
<rect x="140" y="367" width="10" height="2" fill="#ff3232"/>
<rect x="124" y="361" width="13" height="2" fill="#ff3232"/>
<rect x="180" y="322" width="1" height="13" fill="#32cd32"/>
<rect x="186" y="322" width="1" height="31" fill="#32cd32"/>
<rect x="192" y="322" width="1" height="45" fill="#32cd32"/>
<rect x="197" y="322" width="1" height="51" fill="#32cd32"/>
<rect x="203" y="322" width="1" height="50" fill="#32cd32"/>
<rect x="209" y="322" width="1" height="42" fill="#32cd32"/>
<rect x="215" y="322" width="1" height="26" fill="#32cd32"/>
<rect x="220" y="322" width="1" height="7" fill="#32cd32"/>
<rect x="226" y="308" width="1" height="15" fill="#32cd32"/>
<rect x="232" y="291" width="1" height="32" fill="#32cd32"/>
<rect x="238" y="278" width="1" height="45" fill="#32cd32"/>
<rect x="244" y="272" width="1" height="51" fill="#32cd32"/>
<rect x="249" y="274" width="1" height="49" fill="#32cd32"/>
<rect x="255" y="283" width="1" height="40" fill="#32cd32"/>
<rect x="261" y="299" width="1" height="24" fill="#32cd32"/>
<rect x="267" y="318" width="1" height="5" fill="#32cd32"/>
<rect x="272" y="322" width="1" height="17" fill="#32cd32"/>
<rect x="278" y="322" width="1" height="34" fill="#32cd32"/>
<rect x="284" y="322" width="1" height="46" fill="#32cd32"/>
<rect x="290" y="322" width="1" height="52" fill="#32cd32"/>
<rect x="296" y="322" width="1" height="49" fill="#32cd32"/>
<rect x="301" y="322" width="1" height="40" fill="#32cd32"/>
<rect x="307" y="322" width="1" height="24" fill="#32cd32"/>
<rect x="313" y="322" width="1" height="4" fill="#32cd32"/>
<rect x="319" y="306" width="1" height="17" fill="#32cd32"/>
<rect x="324" y="289" width="1" height="34" fill="#32cd32"/>
<rect x="330" y="277" width="1" height="46" fill="#32cd32"/>
<rect x="336" y="272" width="1" height="51" fill="#32cd32"/>
<rect x="342" y="275" width="1" height="48" fill="#32cd32"/>
<rect x="347" y="285" width="1" height="38" fill="#32cd32"/>
<rect x="353" y="301" width="1" height="22" fill="#32cd32"/>
<rect x="359" y="321" width="1" height="2" fill="#32cd32"/>
<rect x="365" y="322" width="1" height="19" fill="#32cd32"/>
<rect x="371" y="322" width="1" height="36" fill="#32cd32"/>
<rect x="376" y="322" width="1" height="48" fill="#32cd32"/>
<rect x="382" y="322" width="1" height="52" fill="#32cd32"/>
<rect x="388" y="322" width="1" height="48" fill="#32cd32"/>
<rect x="394" y="322" width="1" height="37" fill="#32cd32"/>
<rect x="399" y="322" width="1" height="21" fill="#32cd32"/>
<rect x="411" y="303" width="1" height="20" fill="#32cd32"/>
<rect x="417" y="287" width="1" height="36" fill="#32cd32"/>
<rect x="423" y="276" width="1" height="47" fill="#32cd32"/>
<rect x="428" y="272" width="1" height="51" fill="#32cd32"/>
<rect x="434" y="275" width="1" height="48" fill="#32cd32"/>
<rect x="440" y="286" width="1" height="37" fill="#32cd32"/>
<rect x="446" y="302" width="1" height="21" fill="#32cd32"/>
<rect x="451" y="320" width="1" height="3" fill="#32cd32"/>
<rect x="457" y="322" width="1" height="19" fill="#32cd32"/>
<rect x="463" y="322" width="1" height="36" fill="#32cd32"/>
<rect x="469" y="322" width="1" height="47" fill="#32cd32"/>
<rect x="475" y="322" width="1" height="52" fill="#32cd32"/>
<rect x="480" y="322" width="1" height="49" fill="#32cd32"/>
<rect x="486" y="322" width="1" height="39" fill="#32cd32"/>
<rect x="492" y="322" width="1" height="23" fill="#32cd32"/>
<rect x="498" y="322" width="1" height="4" fill="#32cd32"/>
<rect x="503" y="306" width="1" height="17" fill="#32cd32"/>
<rect x="509" y="289" width="1" height="34" fill="#32cd32"/>
<rect x="515" y="277" width="1" height="46" fill="#32cd32"/>
<rect x="521" y="272" width="1" height="51" fill="#32cd32"/>
<rect x="526" y="274" width="1" height="49" fill="#32cd32"/>
<rect x="532" y="284" width="1" height="39" fill="#32cd32"/>
<rect x="538" y="299" width="1" height="24" fill="#32cd32"/>
<rect x="544" y="317" width="1" height="6" fill="#32cd32"/>
<rect x="550" y="322" width="1" height="16" fill="#32cd32"/>
<rect x="555" y="322" width="1" height="33" fill="#32cd32"/>
<rect x="561" y="322" width="1" height="46" fill="#32cd32"/>
<rect x="567" y="322" width="1" height="52" fill="#32cd32"/>
<rect x="573" y="322" width="1" height="50" fill="#32cd32"/>
<rect x="578" y="322" width="1" height="41" fill="#32cd32"/>
<rect x="584" y="322" width="1" height="26" fill="#32cd32"/>
<rect x="590" y="322" width="1" height="8" fill="#32cd32"/>
<rect x="596" y="309" width="1" height="14" fill="#32cd32"/>
<rect x="602" y="292" width="1" height="31" fill="#32cd32"/>
<rect x="607" y="279" width="1" height="44" fill="#32cd32"/>
<rect x="613" y="273" width="1" height="50" fill="#32cd32"/>
<rect x="619" y="273" width="1" height="50" fill="#32cd32"/>
<rect x="625" y="281" width="1" height="42" fill="#32cd32"/>
<rect x="630" y="296" width="1" height="27" fill="#32cd32"/>
<rect x="636" y="314" width="1" height="9" fill="#32cd32"/>
<rect x="642" y="322" width="1" height="12" fill="#32cd32"/>
<rect x="648" y="322" width="1" height="30" fill="#32cd32"/>
<rect x="654" y="322" width="1" height="44" fill="#32cd32"/>
<rect x="659" y="322" width="1" height="51" fill="#32cd32"/>
<rect x="665" y="322" width="1" height="51" fill="#32cd32"/>
<rect x="671" y="322" width="1" height="44" fill="#32cd32"/>
<rect x="677" y="322" width="1" height="30" fill="#32cd32"/>
<rect x="682" y="322" width="1" height="12" fill="#32cd32"/>
<rect x="688" y="313" width="1" height="10" fill="#32cd32"/>
<rect x="694" y="295" width="1" height="28" fill="#32cd32"/>
<rect x="700" y="281" width="1" height="42" fill="#32cd32"/>
<rect x="706" y="273" width="1" height="50" fill="#32cd32"/>
<rect x="711" y="273" width="1" height="50" fill="#32cd32"/>
<rect x="717" y="280" width="1" height="43" fill="#32cd32"/>
<rect x="723" y="293" width="1" height="30" fill="#32cd32"/>
<rect x="729" y="311" width="1" height="12" fill="#32cd32"/>
<rect x="734" y="322" width="1" height="9" fill="#32cd32"/>
<rect x="175" y="322" width="561" height="1" fill="#ff3232"/>
<rect x="175" y="272" width="1" height="103" fill="#fff"/>
</svg>
<div style="left:742px;top:253px;width:25px;height:15px;background:#aeb2c3;"></div>
<div style="left:742px;top:253px;width:25px;height:1px;background:#e8eaf0;"></div>
<div style="left:742px;top:253px;width:1px;height:15px;background:#e8eaf0;"></div>
<div style="left:742px;top:267px;width:25px;height:1px;background:#63667a;"></div>
<div style="left:766px;top:253px;width:1px;height:15px;background:#63667a;"></div>
<div style="left:746px;top:263px;width:2px;height:2px;background:#000;"></div>
<div style="left:752px;top:263px;width:2px;height:2px;background:#000;"></div>
<div style="left:758px;top:263px;width:2px;height:2px;background:#000;"></div>
<div style="left:741px;top:270px;width:212px;height:16px;background:#c1c1c1;"></div>
<div style="left:741px;top:270px;width:212px;height:1px;background:#ececec;"></div>
<div style="left:741px;top:270px;width:1px;height:16px;background:#ececec;"></div>
<div style="left:741px;top:285px;width:212px;height:1px;background:#707070;"></div>
<div style="left:952px;top:270px;width:1px;height:16px;background:#707070;"></div>
<span style="left:742px;top:270px;font-family:'Liberation Mono';font-weight:bold;font-size:16.67px;line-height:16px;color:#6a5acd">...put_fminput.10.sig</span>
<span style="left:742px;top:287.75px;font-family:'Liberation Mono';font-weight:bold;font-size:16.67px;line-height:16px;color:#111">Fxp attr. = <span style="position:static;color:#6a5acd">&lt;8,0,t&gt;</span></span>
<span style="left:742px;top:304.4px;font-family:'Liberation Mono';font-weight:bold;font-size:16.67px;line-height:16px;color:#111"># Pts  = <span style="position:static;color:#6a5acd">1000</span></span>
<span style="left:742px;top:322.3px;font-family:'Liberation Mono';font-weight:bold;font-size:16.67px;line-height:16px;color:#111">Point# = <span style="position:static;color:#6a5acd">162</span></span>
<span style="left:742px;top:338px;font-family:'Liberation Mono';font-weight:bold;font-size:16.67px;line-height:16px;color:#111">Time   = <span style="position:static;color:#6a5acd">162 sec</span></span>
<span style="left:742px;top:355.5px;font-family:'Liberation Mono';font-weight:bold;font-size:16.67px;line-height:16px;color:#111">Value  = <span style="position:static;color:#6a5acd">1.48e-01</span></span>
<div style="left:84px;top:381px;width:872px;height:3px;background:#aeb2c3;"></div>
<div style="left:84px;top:384px;width:872px;height:1px;background:#000;"></div>
<div style="left:84px;top:385px;width:872px;height:1px;background:#fff;"></div>
<div style="left:84px;top:386px;width:872px;height:3px;background:#aeb2c3;"></div>
<div style="left:87px;top:393px;width:20px;height:15px;background:#d4d6de;"></div>
<div style="left:88px;top:394px;width:18px;height:13px;background:#aeb2c3;"></div>
<div style="left:88px;top:394px;width:18px;height:1px;background:#e8eaf0;"></div>
<div style="left:88px;top:394px;width:1px;height:13px;background:#e8eaf0;"></div>
<div style="left:88px;top:406px;width:18px;height:1px;background:#63667a;"></div>
<div style="left:105px;top:394px;width:1px;height:13px;background:#63667a;"></div>
<span style="left:90px;top:396.5px;font-family:'Liberation Mono';font-weight:bold;font-size:13px;line-height:10px;color:#000;letter-spacing:-1.2px">s<span style="position:static;font-size:10.5px">3</span></span>
<span style="left:173px;width:564px;text-align:center;top:393px;font-family:'Liberation Mono';font-weight:bold;font-size:16.67px;line-height:16px;color:#6a5acd">PLL generated cosine</span>
<div style="left:89px;top:409px;width:649px;height:108px;background:#040404;"></div>
<svg style="left:0;top:0" width="990" height="978" shape-rendering="crispEdges">
<rect x="154" y="411" width="20" height="2" fill="#ff3232"/>
<rect x="154" y="513" width="20" height="2" fill="#ff3232"/>
<rect x="172" y="411" width="2" height="104" fill="#ff3232"/>
<rect x="144" y="413" width="2" height="15" fill="#ff3232"/>
<rect x="140" y="414" width="4" height="2" fill="#ff3232"/>
<rect x="143" y="413" width="1" height="1" fill="#ff3232"/>
<rect x="140" y="427" width="10" height="2" fill="#ff3232"/>
<rect x="144" y="493" width="2" height="15" fill="#ff3232"/>
<rect x="140" y="494" width="4" height="2" fill="#ff3232"/>
<rect x="143" y="493" width="1" height="1" fill="#ff3232"/>
<rect x="140" y="507" width="10" height="2" fill="#ff3232"/>
<rect x="124" y="501" width="13" height="2" fill="#ff3232"/>
<rect x="180" y="462" width="1" height="52" fill="#32cd32"/>
<rect x="186" y="462" width="1" height="45" fill="#32cd32"/>
<rect x="192" y="462" width="1" height="31" fill="#32cd32"/>
<rect x="197" y="462" width="1" height="13" fill="#32cd32"/>
<rect x="203" y="454" width="1" height="9" fill="#32cd32"/>
<rect x="209" y="436" width="1" height="27" fill="#32cd32"/>
<rect x="215" y="421" width="1" height="42" fill="#32cd32"/>
<rect x="220" y="413" width="1" height="50" fill="#32cd32"/>
<rect x="226" y="413" width="1" height="50" fill="#32cd32"/>
<rect x="232" y="420" width="1" height="43" fill="#32cd32"/>
<rect x="238" y="434" width="1" height="29" fill="#32cd32"/>
<rect x="244" y="452" width="1" height="11" fill="#32cd32"/>
<rect x="249" y="462" width="1" height="11" fill="#32cd32"/>
<rect x="255" y="462" width="1" height="30" fill="#32cd32"/>
<rect x="261" y="462" width="1" height="44" fill="#32cd32"/>
<rect x="267" y="462" width="1" height="51" fill="#32cd32"/>
<rect x="272" y="462" width="1" height="51" fill="#32cd32"/>
<rect x="278" y="462" width="1" height="43" fill="#32cd32"/>
<rect x="284" y="462" width="1" height="28" fill="#32cd32"/>
<rect x="290" y="462" width="1" height="9" fill="#32cd32"/>
<rect x="296" y="451" width="1" height="12" fill="#32cd32"/>
<rect x="301" y="433" width="1" height="30" fill="#32cd32"/>
<rect x="307" y="419" width="1" height="44" fill="#32cd32"/>
<rect x="313" y="413" width="1" height="50" fill="#32cd32"/>
<rect x="319" y="413" width="1" height="50" fill="#32cd32"/>
<rect x="324" y="422" width="1" height="41" fill="#32cd32"/>
<rect x="330" y="436" width="1" height="27" fill="#32cd32"/>
<rect x="336" y="455" width="1" height="8" fill="#32cd32"/>
<rect x="342" y="462" width="1" height="14" fill="#32cd32"/>
<rect x="347" y="462" width="1" height="32" fill="#32cd32"/>
<rect x="353" y="462" width="1" height="45" fill="#32cd32"/>
<rect x="359" y="462" width="1" height="52" fill="#32cd32"/>
<rect x="365" y="462" width="1" height="50" fill="#32cd32"/>
<rect x="371" y="462" width="1" height="41" fill="#32cd32"/>
<rect x="376" y="462" width="1" height="25" fill="#32cd32"/>
<rect x="382" y="462" width="1" height="6" fill="#32cd32"/>
<rect x="388" y="448" width="1" height="15" fill="#32cd32"/>
<rect x="394" y="430" width="1" height="33" fill="#32cd32"/>
<rect x="399" y="418" width="1" height="45" fill="#32cd32"/>
<rect x="405" y="412" width="1" height="51" fill="#32cd32"/>
<rect x="411" y="414" width="1" height="49" fill="#32cd32"/>
<rect x="417" y="424" width="1" height="39" fill="#32cd32"/>
<rect x="423" y="440" width="1" height="23" fill="#32cd32"/>
<rect x="428" y="459" width="1" height="4" fill="#32cd32"/>
<rect x="434" y="462" width="1" height="17" fill="#32cd32"/>
<rect x="440" y="462" width="1" height="35" fill="#32cd32"/>
<rect x="446" y="462" width="1" height="47" fill="#32cd32"/>
<rect x="451" y="462" width="1" height="52" fill="#32cd32"/>
<rect x="457" y="462" width="1" height="49" fill="#32cd32"/>
<rect x="463" y="462" width="1" height="39" fill="#32cd32"/>
<rect x="469" y="462" width="1" height="23" fill="#32cd32"/>
<rect x="475" y="462" width="1" height="4" fill="#32cd32"/>
<rect x="480" y="446" width="1" height="17" fill="#32cd32"/>
<rect x="486" y="429" width="1" height="34" fill="#32cd32"/>
<rect x="492" y="417" width="1" height="46" fill="#32cd32"/>
<rect x="498" y="412" width="1" height="51" fill="#32cd32"/>
<rect x="503" y="415" width="1" height="48" fill="#32cd32"/>
<rect x="509" y="425" width="1" height="38" fill="#32cd32"/>
<rect x="515" y="441" width="1" height="22" fill="#32cd32"/>
<rect x="521" y="460" width="1" height="3" fill="#32cd32"/>
<rect x="526" y="462" width="1" height="18" fill="#32cd32"/>
<rect x="532" y="462" width="1" height="35" fill="#32cd32"/>
<rect x="538" y="462" width="1" height="47" fill="#32cd32"/>
<rect x="544" y="462" width="1" height="52" fill="#32cd32"/>
<rect x="550" y="462" width="1" height="49" fill="#32cd32"/>
<rect x="555" y="462" width="1" height="39" fill="#32cd32"/>
<rect x="561" y="462" width="1" height="23" fill="#32cd32"/>
<rect x="567" y="462" width="1" height="3" fill="#32cd32"/>
<rect x="573" y="445" width="1" height="18" fill="#32cd32"/>
<rect x="578" y="428" width="1" height="35" fill="#32cd32"/>
<rect x="584" y="417" width="1" height="46" fill="#32cd32"/>
<rect x="590" y="412" width="1" height="51" fill="#32cd32"/>
<rect x="596" y="415" width="1" height="48" fill="#32cd32"/>
<rect x="602" y="425" width="1" height="38" fill="#32cd32"/>
<rect x="607" y="440" width="1" height="23" fill="#32cd32"/>
<rect x="613" y="459" width="1" height="4" fill="#32cd32"/>
<rect x="619" y="462" width="1" height="18" fill="#32cd32"/>
<rect x="625" y="462" width="1" height="35" fill="#32cd32"/>
<rect x="630" y="462" width="1" height="47" fill="#32cd32"/>
<rect x="636" y="462" width="1" height="52" fill="#32cd32"/>
<rect x="642" y="462" width="1" height="49" fill="#32cd32"/>
<rect x="648" y="462" width="1" height="40" fill="#32cd32"/>
<rect x="654" y="462" width="1" height="24" fill="#32cd32"/>
<rect x="659" y="462" width="1" height="5" fill="#32cd32"/>
<rect x="665" y="447" width="1" height="16" fill="#32cd32"/>
<rect x="671" y="430" width="1" height="33" fill="#32cd32"/>
<rect x="677" y="418" width="1" height="45" fill="#32cd32"/>
<rect x="682" y="412" width="1" height="51" fill="#32cd32"/>
<rect x="688" y="414" width="1" height="49" fill="#32cd32"/>
<rect x="694" y="423" width="1" height="40" fill="#32cd32"/>
<rect x="700" y="437" width="1" height="26" fill="#32cd32"/>
<rect x="706" y="455" width="1" height="8" fill="#32cd32"/>
<rect x="711" y="462" width="1" height="14" fill="#32cd32"/>
<rect x="717" y="462" width="1" height="32" fill="#32cd32"/>
<rect x="723" y="462" width="1" height="45" fill="#32cd32"/>
<rect x="729" y="462" width="1" height="51" fill="#32cd32"/>
<rect x="734" y="462" width="1" height="51" fill="#32cd32"/>
<rect x="175" y="462" width="561" height="1" fill="#ff3232"/>
<rect x="175" y="412" width="1" height="103" fill="#fff"/>
</svg>
<div style="left:742px;top:393px;width:25px;height:15px;background:#aeb2c3;"></div>
<div style="left:742px;top:393px;width:25px;height:1px;background:#e8eaf0;"></div>
<div style="left:742px;top:393px;width:1px;height:15px;background:#e8eaf0;"></div>
<div style="left:742px;top:407px;width:25px;height:1px;background:#63667a;"></div>
<div style="left:766px;top:393px;width:1px;height:15px;background:#63667a;"></div>
<div style="left:746px;top:403px;width:2px;height:2px;background:#000;"></div>
<div style="left:752px;top:403px;width:2px;height:2px;background:#000;"></div>
<div style="left:758px;top:403px;width:2px;height:2px;background:#000;"></div>
<div style="left:741px;top:410px;width:212px;height:16px;background:#c1c1c1;"></div>
<div style="left:741px;top:410px;width:212px;height:1px;background:#ececec;"></div>
<div style="left:741px;top:410px;width:1px;height:16px;background:#ececec;"></div>
<div style="left:741px;top:425px;width:212px;height:1px;background:#707070;"></div>
<div style="left:952px;top:410px;width:1px;height:16px;background:#707070;"></div>
<span style="left:742px;top:410px;font-family:'Liberation Mono';font-weight:bold;font-size:16.67px;line-height:16px;color:#6a5acd">....2_data_cos.10.sig</span>
<span style="left:742px;top:427.75px;font-family:'Liberation Mono';font-weight:bold;font-size:16.67px;line-height:16px;color:#111">Fxp attr. = <span style="position:static;color:#6a5acd">&lt;8,0,t&gt;</span></span>
<span style="left:742px;top:444.4px;font-family:'Liberation Mono';font-weight:bold;font-size:16.67px;line-height:16px;color:#111"># Pts  = <span style="position:static;color:#6a5acd">1000</span></span>
<span style="left:742px;top:462.3px;font-family:'Liberation Mono';font-weight:bold;font-size:16.67px;line-height:16px;color:#111">Point# = <span style="position:static;color:#6a5acd">162</span></span>
<span style="left:742px;top:478px;font-family:'Liberation Mono';font-weight:bold;font-size:16.67px;line-height:16px;color:#111">Time   = <span style="position:static;color:#6a5acd">162 sec</span></span>
<span style="left:742px;top:495.5px;font-family:'Liberation Mono';font-weight:bold;font-size:16.67px;line-height:16px;color:#111">Value  = <span style="position:static;color:#6a5acd">-9.69e-01</span></span>
<div style="left:84px;top:521px;width:872px;height:3px;background:#aeb2c3;"></div>
<div style="left:84px;top:524px;width:872px;height:1px;background:#000;"></div>
<div style="left:84px;top:525px;width:872px;height:1px;background:#fff;"></div>
<div style="left:84px;top:526px;width:872px;height:3px;background:#aeb2c3;"></div>
<div style="left:87px;top:533px;width:20px;height:15px;background:#d4d6de;"></div>
<div style="left:88px;top:534px;width:18px;height:13px;background:#aeb2c3;"></div>
<div style="left:88px;top:534px;width:18px;height:1px;background:#e8eaf0;"></div>
<div style="left:88px;top:534px;width:1px;height:13px;background:#e8eaf0;"></div>
<div style="left:88px;top:546px;width:18px;height:1px;background:#63667a;"></div>
<div style="left:105px;top:534px;width:1px;height:13px;background:#63667a;"></div>
<span style="left:90px;top:536.5px;font-family:'Liberation Mono';font-weight:bold;font-size:13px;line-height:10px;color:#000;letter-spacing:-1.2px">s<span style="position:static;font-size:10.5px">4</span></span>
<span style="left:173px;width:564px;text-align:center;top:533px;font-family:'Liberation Mono';font-weight:bold;font-size:16.67px;line-height:16px;color:#6a5acd">phase detector (multiplier) output</span>
<div style="left:89px;top:549px;width:649px;height:108px;background:#040404;"></div>
<svg style="left:0;top:0" width="990" height="978" shape-rendering="crispEdges">
<rect x="154" y="551" width="20" height="2" fill="#ff3232"/>
<rect x="154" y="653" width="20" height="2" fill="#ff3232"/>
<rect x="172" y="551" width="2" height="104" fill="#ff3232"/>
<rect x="144" y="553" width="2" height="15" fill="#ff3232"/>
<rect x="140" y="554" width="4" height="2" fill="#ff3232"/>
<rect x="143" y="553" width="1" height="1" fill="#ff3232"/>
<rect x="140" y="567" width="10" height="2" fill="#ff3232"/>
<rect x="144" y="633" width="2" height="15" fill="#ff3232"/>
<rect x="140" y="634" width="4" height="2" fill="#ff3232"/>
<rect x="143" y="633" width="1" height="1" fill="#ff3232"/>
<rect x="140" y="647" width="10" height="2" fill="#ff3232"/>
<rect x="124" y="641" width="13" height="2" fill="#ff3232"/>
<rect x="180" y="590" width="1" height="13" fill="#32cd32"/>
<rect x="186" y="577" width="1" height="26" fill="#32cd32"/>
<rect x="192" y="577" width="1" height="26" fill="#32cd32"/>
<rect x="197" y="590" width="1" height="13" fill="#32cd32"/>
<rect x="203" y="602" width="1" height="9" fill="#32cd32"/>
<rect x="209" y="602" width="1" height="22" fill="#32cd32"/>
<rect x="215" y="602" width="1" height="22" fill="#32cd32"/>
<rect x="220" y="602" width="1" height="7" fill="#32cd32"/>
<rect x="226" y="589" width="1" height="14" fill="#32cd32"/>
<rect x="232" y="576" width="1" height="27" fill="#32cd32"/>
<rect x="238" y="577" width="1" height="26" fill="#32cd32"/>
<rect x="244" y="592" width="1" height="11" fill="#32cd32"/>
<rect x="249" y="602" width="1" height="11" fill="#32cd32"/>
<rect x="255" y="602" width="1" height="23" fill="#32cd32"/>
<rect x="261" y="602" width="1" height="21" fill="#32cd32"/>
<rect x="267" y="602" width="1" height="5" fill="#32cd32"/>
<rect x="272" y="587" width="1" height="16" fill="#32cd32"/>
<rect x="278" y="575" width="1" height="28" fill="#32cd32"/>
<rect x="284" y="578" width="1" height="25" fill="#32cd32"/>
<rect x="290" y="594" width="1" height="9" fill="#32cd32"/>
<rect x="296" y="602" width="1" height="12" fill="#32cd32"/>
<rect x="301" y="602" width="1" height="24" fill="#32cd32"/>
<rect x="307" y="602" width="1" height="20" fill="#32cd32"/>
<rect x="313" y="602" width="1" height="4" fill="#32cd32"/>
<rect x="319" y="586" width="1" height="17" fill="#32cd32"/>
<rect x="324" y="575" width="1" height="28" fill="#32cd32"/>
<rect x="330" y="579" width="1" height="24" fill="#32cd32"/>
<rect x="336" y="595" width="1" height="8" fill="#32cd32"/>
<rect x="342" y="602" width="1" height="13" fill="#32cd32"/>
<rect x="347" y="602" width="1" height="24" fill="#32cd32"/>
<rect x="353" y="602" width="1" height="19" fill="#32cd32"/>
<rect x="359" y="602" width="1" height="2" fill="#32cd32"/>
<rect x="365" y="585" width="1" height="18" fill="#32cd32"/>
<rect x="371" y="575" width="1" height="28" fill="#32cd32"/>
<rect x="376" y="580" width="1" height="23" fill="#32cd32"/>
<rect x="382" y="597" width="1" height="6" fill="#32cd32"/>
<rect x="388" y="602" width="1" height="15" fill="#32cd32"/>
<rect x="394" y="602" width="1" height="24" fill="#32cd32"/>
<rect x="399" y="602" width="1" height="18" fill="#32cd32"/>
<rect x="411" y="584" width="1" height="19" fill="#32cd32"/>
<rect x="417" y="575" width="1" height="28" fill="#32cd32"/>
<rect x="423" y="581" width="1" height="22" fill="#32cd32"/>
<rect x="428" y="599" width="1" height="4" fill="#32cd32"/>
<rect x="434" y="602" width="1" height="16" fill="#32cd32"/>
<rect x="440" y="602" width="1" height="25" fill="#32cd32"/>
<rect x="446" y="602" width="1" height="20" fill="#32cd32"/>
<rect x="451" y="602" width="1" height="3" fill="#32cd32"/>
<rect x="457" y="585" width="1" height="18" fill="#32cd32"/>
<rect x="463" y="577" width="1" height="26" fill="#32cd32"/>
<rect x="469" y="582" width="1" height="21" fill="#32cd32"/>
<rect x="475" y="599" width="1" height="4" fill="#32cd32"/>
<rect x="480" y="602" width="1" height="17" fill="#32cd32"/>
<rect x="486" y="602" width="1" height="26" fill="#32cd32"/>
<rect x="492" y="602" width="1" height="21" fill="#32cd32"/>
<rect x="498" y="602" width="1" height="4" fill="#32cd32"/>
<rect x="503" y="587" width="1" height="16" fill="#32cd32"/>
<rect x="509" y="578" width="1" height="25" fill="#32cd32"/>
<rect x="515" y="583" width="1" height="20" fill="#32cd32"/>
<rect x="521" y="600" width="1" height="3" fill="#32cd32"/>
<rect x="526" y="602" width="1" height="17" fill="#32cd32"/>
<rect x="532" y="602" width="1" height="27" fill="#32cd32"/>
<rect x="538" y="602" width="1" height="22" fill="#32cd32"/>
<rect x="544" y="602" width="1" height="6" fill="#32cd32"/>
<rect x="550" y="588" width="1" height="15" fill="#32cd32"/>
<rect x="555" y="579" width="1" height="24" fill="#32cd32"/>
<rect x="561" y="583" width="1" height="20" fill="#32cd32"/>
<rect x="567" y="600" width="1" height="3" fill="#32cd32"/>
<rect x="573" y="602" width="1" height="18" fill="#32cd32"/>
<rect x="578" y="602" width="1" height="28" fill="#32cd32"/>
<rect x="584" y="602" width="1" height="24" fill="#32cd32"/>
<rect x="590" y="602" width="1" height="8" fill="#32cd32"/>
<rect x="596" y="590" width="1" height="13" fill="#32cd32"/>
<rect x="602" y="580" width="1" height="23" fill="#32cd32"/>
<rect x="607" y="583" width="1" height="20" fill="#32cd32"/>
<rect x="613" y="599" width="1" height="4" fill="#32cd32"/>
<rect x="619" y="602" width="1" height="17" fill="#32cd32"/>
<rect x="625" y="602" width="1" height="28" fill="#32cd32"/>
<rect x="630" y="602" width="1" height="25" fill="#32cd32"/>
<rect x="636" y="602" width="1" height="10" fill="#32cd32"/>
<rect x="642" y="592" width="1" height="11" fill="#32cd32"/>
<rect x="648" y="580" width="1" height="23" fill="#32cd32"/>
<rect x="654" y="583" width="1" height="20" fill="#32cd32"/>
<rect x="659" y="598" width="1" height="5" fill="#32cd32"/>
<rect x="665" y="602" width="1" height="16" fill="#32cd32"/>
<rect x="671" y="602" width="1" height="28" fill="#32cd32"/>
<rect x="677" y="602" width="1" height="26" fill="#32cd32"/>
<rect x="682" y="602" width="1" height="12" fill="#32cd32"/>
<rect x="688" y="593" width="1" height="10" fill="#32cd32"/>
<rect x="694" y="581" width="1" height="22" fill="#32cd32"/>
<rect x="700" y="582" width="1" height="21" fill="#32cd32"/>
<rect x="706" y="596" width="1" height="7" fill="#32cd32"/>
<rect x="711" y="602" width="1" height="14" fill="#32cd32"/>
<rect x="717" y="602" width="1" height="27" fill="#32cd32"/>
<rect x="723" y="602" width="1" height="26" fill="#32cd32"/>
<rect x="729" y="602" width="1" height="13" fill="#32cd32"/>
<rect x="734" y="594" width="1" height="9" fill="#32cd32"/>
<rect x="175" y="602" width="561" height="1" fill="#ff3232"/>
<rect x="175" y="552" width="1" height="103" fill="#fff"/>
</svg>
<div style="left:742px;top:533px;width:25px;height:15px;background:#aeb2c3;"></div>
<div style="left:742px;top:533px;width:25px;height:1px;background:#e8eaf0;"></div>
<div style="left:742px;top:533px;width:1px;height:15px;background:#e8eaf0;"></div>
<div style="left:742px;top:547px;width:25px;height:1px;background:#63667a;"></div>
<div style="left:766px;top:533px;width:1px;height:15px;background:#63667a;"></div>
<div style="left:746px;top:543px;width:2px;height:2px;background:#000;"></div>
<div style="left:752px;top:543px;width:2px;height:2px;background:#000;"></div>
<div style="left:758px;top:543px;width:2px;height:2px;background:#000;"></div>
<div style="left:741px;top:550px;width:212px;height:16px;background:#c1c1c1;"></div>
<div style="left:741px;top:550px;width:212px;height:1px;background:#ececec;"></div>
<div style="left:741px;top:550px;width:1px;height:16px;background:#ececec;"></div>
<div style="left:741px;top:565px;width:212px;height:1px;background:#707070;"></div>
<div style="left:952px;top:550px;width:1px;height:16px;background:#707070;"></div>
<span style="left:742px;top:550px;font-family:'Liberation Mono';font-weight:bold;font-size:16.67px;line-height:16px;color:#6a5acd">...42_out_mult.10.sig</span>
<span style="left:742px;top:567.75px;font-family:'Liberation Mono';font-weight:bold;font-size:16.67px;line-height:16px;color:#111">Fxp attr. = <span style="position:static;color:#6a5acd">&lt;8,0,t&gt;</span></span>
<span style="left:742px;top:584.4px;font-family:'Liberation Mono';font-weight:bold;font-size:16.67px;line-height:16px;color:#111"># Pts  = <span style="position:static;color:#6a5acd">1000</span></span>
<span style="left:742px;top:602.3px;font-family:'Liberation Mono';font-weight:bold;font-size:16.67px;line-height:16px;color:#111">Point# = <span style="position:static;color:#6a5acd">162</span></span>
<span style="left:742px;top:618px;font-family:'Liberation Mono';font-weight:bold;font-size:16.67px;line-height:16px;color:#111">Time   = <span style="position:static;color:#6a5acd">162 sec</span></span>
<span style="left:742px;top:635.5px;font-family:'Liberation Mono';font-weight:bold;font-size:16.67px;line-height:16px;color:#111">Value  = <span style="position:static;color:#6a5acd">-1.48e-01</span></span>
<div style="left:84px;top:661px;width:872px;height:3px;background:#aeb2c3;"></div>
<div style="left:84px;top:664px;width:872px;height:1px;background:#000;"></div>
<div style="left:84px;top:665px;width:872px;height:1px;background:#fff;"></div>
<div style="left:84px;top:666px;width:872px;height:3px;background:#aeb2c3;"></div>
<div style="left:87px;top:673px;width:20px;height:15px;background:#d4d6de;"></div>
<div style="left:88px;top:674px;width:18px;height:13px;background:#aeb2c3;"></div>
<div style="left:88px;top:674px;width:18px;height:1px;background:#e8eaf0;"></div>
<div style="left:88px;top:674px;width:1px;height:13px;background:#e8eaf0;"></div>
<div style="left:88px;top:686px;width:18px;height:1px;background:#63667a;"></div>
<div style="left:105px;top:674px;width:1px;height:13px;background:#63667a;"></div>
<span style="left:90px;top:676.5px;font-family:'Liberation Mono';font-weight:bold;font-size:13px;line-height:10px;color:#000;letter-spacing:-1.2px">s<span style="position:static;font-size:10.5px">5</span></span>
<span style="left:173px;width:564px;text-align:center;top:673px;font-family:'Liberation Mono';font-weight:bold;font-size:16.67px;line-height:16px;color:#6a5acd">Modulo Accumulator</span>
<div style="left:89px;top:689px;width:649px;height:108px;background:#040404;"></div>
<svg style="left:0;top:0" width="990" height="978" shape-rendering="crispEdges">
<rect x="154" y="691" width="20" height="2" fill="#ff3232"/>
<rect x="154" y="793" width="20" height="2" fill="#ff3232"/>
<rect x="172" y="691" width="2" height="104" fill="#ff3232"/>
<rect x="144" y="693" width="2" height="15" fill="#ff3232"/>
<rect x="140" y="694" width="4" height="2" fill="#ff3232"/>
<rect x="143" y="693" width="1" height="1" fill="#ff3232"/>
<rect x="140" y="707" width="10" height="2" fill="#ff3232"/>
<rect x="144" y="773" width="2" height="15" fill="#ff3232"/>
<rect x="140" y="774" width="4" height="2" fill="#ff3232"/>
<rect x="143" y="773" width="1" height="1" fill="#ff3232"/>
<rect x="140" y="787" width="10" height="2" fill="#ff3232"/>
<rect x="124" y="781" width="13" height="2" fill="#ff3232"/>
<rect x="180" y="716" width="1" height="27" fill="#32cd32"/>
<rect x="186" y="713" width="1" height="30" fill="#32cd32"/>
<rect x="192" y="710" width="1" height="33" fill="#32cd32"/>
<rect x="197" y="706" width="1" height="37" fill="#32cd32"/>
<rect x="203" y="703" width="1" height="40" fill="#32cd32"/>
<rect x="209" y="700" width="1" height="43" fill="#32cd32"/>
<rect x="215" y="697" width="1" height="46" fill="#32cd32"/>
<rect x="220" y="694" width="1" height="49" fill="#32cd32"/>
<rect x="226" y="741" width="1" height="2" fill="#32cd32"/>
<rect x="232" y="738" width="1" height="5" fill="#32cd32"/>
<rect x="238" y="734" width="1" height="9" fill="#32cd32"/>
<rect x="244" y="731" width="1" height="12" fill="#32cd32"/>
<rect x="249" y="728" width="1" height="15" fill="#32cd32"/>
<rect x="255" y="725" width="1" height="18" fill="#32cd32"/>
<rect x="261" y="722" width="1" height="21" fill="#32cd32"/>
<rect x="267" y="719" width="1" height="24" fill="#32cd32"/>
<rect x="272" y="715" width="1" height="28" fill="#32cd32"/>
<rect x="278" y="712" width="1" height="31" fill="#32cd32"/>
<rect x="284" y="708" width="1" height="35" fill="#32cd32"/>
<rect x="290" y="705" width="1" height="38" fill="#32cd32"/>
<rect x="296" y="702" width="1" height="41" fill="#32cd32"/>
<rect x="301" y="699" width="1" height="44" fill="#32cd32"/>
<rect x="307" y="696" width="1" height="47" fill="#32cd32"/>
<rect x="313" y="693" width="1" height="50" fill="#32cd32"/>
<rect x="319" y="740" width="1" height="3" fill="#32cd32"/>
<rect x="324" y="737" width="1" height="6" fill="#32cd32"/>
<rect x="330" y="734" width="1" height="9" fill="#32cd32"/>
<rect x="336" y="730" width="1" height="13" fill="#32cd32"/>
<rect x="342" y="727" width="1" height="16" fill="#32cd32"/>
<rect x="347" y="724" width="1" height="19" fill="#32cd32"/>
<rect x="353" y="721" width="1" height="22" fill="#32cd32"/>
<rect x="359" y="718" width="1" height="25" fill="#32cd32"/>
<rect x="365" y="715" width="1" height="28" fill="#32cd32"/>
<rect x="371" y="712" width="1" height="31" fill="#32cd32"/>
<rect x="376" y="708" width="1" height="35" fill="#32cd32"/>
<rect x="382" y="705" width="1" height="38" fill="#32cd32"/>
<rect x="388" y="702" width="1" height="41" fill="#32cd32"/>
<rect x="394" y="699" width="1" height="44" fill="#32cd32"/>
<rect x="399" y="696" width="1" height="47" fill="#32cd32"/>
<rect x="405" y="693" width="1" height="50" fill="#32cd32"/>
<rect x="411" y="740" width="1" height="3" fill="#32cd32"/>
<rect x="417" y="737" width="1" height="6" fill="#32cd32"/>
<rect x="423" y="734" width="1" height="9" fill="#32cd32"/>
<rect x="428" y="730" width="1" height="13" fill="#32cd32"/>
<rect x="434" y="727" width="1" height="16" fill="#32cd32"/>
<rect x="440" y="724" width="1" height="19" fill="#32cd32"/>
<rect x="446" y="721" width="1" height="22" fill="#32cd32"/>
<rect x="451" y="718" width="1" height="25" fill="#32cd32"/>
<rect x="457" y="715" width="1" height="28" fill="#32cd32"/>
<rect x="463" y="712" width="1" height="31" fill="#32cd32"/>
<rect x="469" y="708" width="1" height="35" fill="#32cd32"/>
<rect x="475" y="705" width="1" height="38" fill="#32cd32"/>
<rect x="480" y="702" width="1" height="41" fill="#32cd32"/>
<rect x="486" y="699" width="1" height="44" fill="#32cd32"/>
<rect x="492" y="696" width="1" height="47" fill="#32cd32"/>
<rect x="498" y="693" width="1" height="50" fill="#32cd32"/>
<rect x="503" y="740" width="1" height="3" fill="#32cd32"/>
<rect x="509" y="737" width="1" height="6" fill="#32cd32"/>
<rect x="515" y="734" width="1" height="9" fill="#32cd32"/>
<rect x="521" y="730" width="1" height="13" fill="#32cd32"/>
<rect x="526" y="727" width="1" height="16" fill="#32cd32"/>
<rect x="532" y="724" width="1" height="19" fill="#32cd32"/>
<rect x="538" y="721" width="1" height="22" fill="#32cd32"/>
<rect x="544" y="718" width="1" height="25" fill="#32cd32"/>
<rect x="550" y="715" width="1" height="28" fill="#32cd32"/>
<rect x="555" y="712" width="1" height="31" fill="#32cd32"/>
<rect x="561" y="708" width="1" height="35" fill="#32cd32"/>
<rect x="567" y="705" width="1" height="38" fill="#32cd32"/>
<rect x="573" y="702" width="1" height="41" fill="#32cd32"/>
<rect x="578" y="699" width="1" height="44" fill="#32cd32"/>
<rect x="584" y="696" width="1" height="47" fill="#32cd32"/>
<rect x="590" y="693" width="1" height="50" fill="#32cd32"/>
<rect x="596" y="740" width="1" height="3" fill="#32cd32"/>
<rect x="602" y="737" width="1" height="6" fill="#32cd32"/>
<rect x="607" y="734" width="1" height="9" fill="#32cd32"/>
<rect x="613" y="730" width="1" height="13" fill="#32cd32"/>
<rect x="619" y="727" width="1" height="16" fill="#32cd32"/>
<rect x="625" y="724" width="1" height="19" fill="#32cd32"/>
<rect x="630" y="721" width="1" height="22" fill="#32cd32"/>
<rect x="636" y="718" width="1" height="25" fill="#32cd32"/>
<rect x="642" y="715" width="1" height="28" fill="#32cd32"/>
<rect x="648" y="712" width="1" height="31" fill="#32cd32"/>
<rect x="654" y="708" width="1" height="35" fill="#32cd32"/>
<rect x="659" y="705" width="1" height="38" fill="#32cd32"/>
<rect x="665" y="702" width="1" height="41" fill="#32cd32"/>
<rect x="671" y="699" width="1" height="44" fill="#32cd32"/>
<rect x="677" y="696" width="1" height="47" fill="#32cd32"/>
<rect x="682" y="693" width="1" height="50" fill="#32cd32"/>
<rect x="688" y="740" width="1" height="3" fill="#32cd32"/>
<rect x="694" y="737" width="1" height="6" fill="#32cd32"/>
<rect x="700" y="734" width="1" height="9" fill="#32cd32"/>
<rect x="706" y="730" width="1" height="13" fill="#32cd32"/>
<rect x="711" y="727" width="1" height="16" fill="#32cd32"/>
<rect x="717" y="724" width="1" height="19" fill="#32cd32"/>
<rect x="723" y="721" width="1" height="22" fill="#32cd32"/>
<rect x="729" y="718" width="1" height="25" fill="#32cd32"/>
<rect x="734" y="715" width="1" height="28" fill="#32cd32"/>
<rect x="175" y="742" width="561" height="1" fill="#ff3232"/>
<rect x="175" y="692" width="1" height="103" fill="#fff"/>
</svg>
<div style="left:742px;top:673px;width:25px;height:15px;background:#aeb2c3;"></div>
<div style="left:742px;top:673px;width:25px;height:1px;background:#e8eaf0;"></div>
<div style="left:742px;top:673px;width:1px;height:15px;background:#e8eaf0;"></div>
<div style="left:742px;top:687px;width:25px;height:1px;background:#63667a;"></div>
<div style="left:766px;top:673px;width:1px;height:15px;background:#63667a;"></div>
<div style="left:746px;top:683px;width:2px;height:2px;background:#000;"></div>
<div style="left:752px;top:683px;width:2px;height:2px;background:#000;"></div>
<div style="left:758px;top:683px;width:2px;height:2px;background:#000;"></div>
<div style="left:741px;top:690px;width:212px;height:16px;background:#c1c1c1;"></div>
<div style="left:741px;top:690px;width:212px;height:1px;background:#ececec;"></div>
<div style="left:741px;top:690px;width:1px;height:16px;background:#ececec;"></div>
<div style="left:741px;top:705px;width:212px;height:1px;background:#707070;"></div>
<div style="left:952px;top:690px;width:1px;height:16px;background:#707070;"></div>
<span style="left:742px;top:690px;font-family:'Liberation Mono';font-weight:bold;font-size:16.67px;line-height:16px;color:#6a5acd">...5_out_accum.10.sig</span>
<span style="left:742px;top:707.75px;font-family:'Liberation Mono';font-weight:bold;font-size:16.67px;line-height:16px;color:#111">Fxp attr. = <span style="position:static;color:#6a5acd">&lt;18,0,u&gt;</span></span>
<span style="left:742px;top:724.4px;font-family:'Liberation Mono';font-weight:bold;font-size:16.67px;line-height:16px;color:#111"># Pts  = <span style="position:static;color:#6a5acd">1000</span></span>
<span style="left:742px;top:742.3px;font-family:'Liberation Mono';font-weight:bold;font-size:16.67px;line-height:16px;color:#111">Point# = <span style="position:static;color:#6a5acd">162</span></span>
<span style="left:742px;top:758px;font-family:'Liberation Mono';font-weight:bold;font-size:16.67px;line-height:16px;color:#111">Time   = <span style="position:static;color:#6a5acd">162 sec</span></span>
<span style="left:742px;top:775.5px;font-family:'Liberation Mono';font-weight:bold;font-size:16.67px;line-height:16px;color:#111">Value  = <span style="position:static;color:#6a5acd">4.61e-01</span></span>
<div style="left:84px;top:801px;width:872px;height:3px;background:#aeb2c3;"></div>
<div style="left:84px;top:804px;width:872px;height:1px;background:#000;"></div>
<div style="left:84px;top:805px;width:872px;height:1px;background:#fff;"></div>
<div style="left:84px;top:806px;width:872px;height:3px;background:#aeb2c3;"></div>
<div style="left:87px;top:812px;width:20px;height:16px;background:#b04878;"></div>
<div style="left:88px;top:813px;width:18px;height:14px;background:#aeb2c3;"></div>
<div style="left:88px;top:813px;width:18px;height:1px;background:#e8eaf0;"></div>
<div style="left:88px;top:813px;width:1px;height:14px;background:#e8eaf0;"></div>
<div style="left:88px;top:826px;width:18px;height:1px;background:#63667a;"></div>
<div style="left:105px;top:813px;width:1px;height:14px;background:#63667a;"></div>
<span style="left:90px;top:815.5px;font-family:'Liberation Mono';font-weight:bold;font-size:13px;line-height:10px;color:#000;letter-spacing:-1.2px">s<span style="position:static;font-size:10.5px">6</span></span>
<span style="left:173px;width:564px;text-align:center;top:812px;font-family:'Liberation Mono';font-weight:bold;font-size:16.67px;line-height:16px;color:#6a5acd">Demodulated Output</span>
<div style="left:89px;top:828px;width:649px;height:104px;background:#040404;"></div>
<svg style="left:0;top:0" width="990" height="978" shape-rendering="crispEdges">
<rect x="154" y="830" width="20" height="2" fill="#ff3232"/>
<rect x="154" y="928" width="20" height="2" fill="#ff3232"/>
<rect x="172" y="830" width="2" height="100" fill="#ff3232"/>
<rect x="144" y="832" width="2" height="15" fill="#ff3232"/>
<rect x="140" y="833" width="4" height="2" fill="#ff3232"/>
<rect x="143" y="832" width="1" height="1" fill="#ff3232"/>
<rect x="140" y="846" width="10" height="2" fill="#ff3232"/>
<rect x="144" y="908" width="2" height="15" fill="#ff3232"/>
<rect x="140" y="909" width="4" height="2" fill="#ff3232"/>
<rect x="143" y="908" width="1" height="1" fill="#ff3232"/>
<rect x="140" y="922" width="10" height="2" fill="#ff3232"/>
<rect x="124" y="916" width="13" height="2" fill="#ff3232"/>
<rect x="180" y="846" width="1" height="34" fill="#32cd32"/>
<rect x="186" y="847" width="1" height="33" fill="#32cd32"/>
<rect x="192" y="846" width="1" height="34" fill="#32cd32"/>
<rect x="197" y="846" width="1" height="34" fill="#32cd32"/>
<rect x="203" y="846" width="1" height="34" fill="#32cd32"/>
<rect x="209" y="847" width="1" height="33" fill="#32cd32"/>
<rect x="215" y="846" width="1" height="34" fill="#32cd32"/>
<rect x="220" y="846" width="1" height="34" fill="#32cd32"/>
<rect x="226" y="847" width="1" height="33" fill="#32cd32"/>
<rect x="232" y="846" width="1" height="34" fill="#32cd32"/>
<rect x="238" y="846" width="1" height="34" fill="#32cd32"/>
<rect x="244" y="846" width="1" height="34" fill="#32cd32"/>
<rect x="249" y="847" width="1" height="33" fill="#32cd32"/>
<rect x="255" y="846" width="1" height="34" fill="#32cd32"/>
<rect x="261" y="846" width="1" height="34" fill="#32cd32"/>
<rect x="267" y="846" width="1" height="34" fill="#32cd32"/>
<rect x="272" y="846" width="1" height="34" fill="#32cd32"/>
<rect x="278" y="847" width="1" height="33" fill="#32cd32"/>
<rect x="284" y="846" width="1" height="34" fill="#32cd32"/>
<rect x="290" y="847" width="1" height="33" fill="#32cd32"/>
<rect x="296" y="846" width="1" height="34" fill="#32cd32"/>
<rect x="301" y="846" width="1" height="34" fill="#32cd32"/>
<rect x="307" y="846" width="1" height="34" fill="#32cd32"/>
<rect x="313" y="846" width="1" height="34" fill="#32cd32"/>
<rect x="319" y="847" width="1" height="33" fill="#32cd32"/>
<rect x="324" y="846" width="1" height="34" fill="#32cd32"/>
<rect x="330" y="847" width="1" height="33" fill="#32cd32"/>
<rect x="336" y="846" width="1" height="34" fill="#32cd32"/>
<rect x="342" y="846" width="1" height="34" fill="#32cd32"/>
<rect x="347" y="846" width="1" height="34" fill="#32cd32"/>
<rect x="353" y="846" width="1" height="34" fill="#32cd32"/>
<rect x="359" y="847" width="1" height="33" fill="#32cd32"/>
<rect x="365" y="846" width="1" height="34" fill="#32cd32"/>
<rect x="371" y="846" width="1" height="34" fill="#32cd32"/>
<rect x="376" y="847" width="1" height="33" fill="#32cd32"/>
<rect x="382" y="846" width="1" height="34" fill="#32cd32"/>
<rect x="388" y="846" width="1" height="34" fill="#32cd32"/>
<rect x="394" y="846" width="1" height="34" fill="#32cd32"/>
<rect x="399" y="847" width="1" height="33" fill="#32cd32"/>
<rect x="405" y="847" width="1" height="33" fill="#32cd32"/>
<rect x="411" y="847" width="1" height="33" fill="#32cd32"/>
<rect x="417" y="847" width="1" height="33" fill="#32cd32"/>
<rect x="423" y="847" width="1" height="33" fill="#32cd32"/>
<rect x="428" y="848" width="1" height="32" fill="#32cd32"/>
<rect x="434" y="848" width="1" height="32" fill="#32cd32"/>
<rect x="440" y="848" width="1" height="32" fill="#32cd32"/>
<rect x="446" y="849" width="1" height="31" fill="#32cd32"/>
<rect x="451" y="849" width="1" height="31" fill="#32cd32"/>
<rect x="457" y="849" width="1" height="31" fill="#32cd32"/>
<rect x="463" y="850" width="1" height="30" fill="#32cd32"/>
<rect x="469" y="851" width="1" height="29" fill="#32cd32"/>
<rect x="475" y="851" width="1" height="29" fill="#32cd32"/>
<rect x="480" y="852" width="1" height="28" fill="#32cd32"/>
<rect x="486" y="853" width="1" height="27" fill="#32cd32"/>
<rect x="492" y="855" width="1" height="25" fill="#32cd32"/>
<rect x="498" y="856" width="1" height="24" fill="#32cd32"/>
<rect x="503" y="857" width="1" height="23" fill="#32cd32"/>
<rect x="509" y="859" width="1" height="21" fill="#32cd32"/>
<rect x="515" y="861" width="1" height="19" fill="#32cd32"/>
<rect x="521" y="862" width="1" height="18" fill="#32cd32"/>
<rect x="526" y="864" width="1" height="16" fill="#32cd32"/>
<rect x="532" y="865" width="1" height="15" fill="#32cd32"/>
<rect x="538" y="867" width="1" height="13" fill="#32cd32"/>
<rect x="544" y="869" width="1" height="11" fill="#32cd32"/>
<rect x="550" y="870" width="1" height="10" fill="#32cd32"/>
<rect x="555" y="872" width="1" height="8" fill="#32cd32"/>
<rect x="561" y="874" width="1" height="6" fill="#32cd32"/>
<rect x="567" y="876" width="1" height="4" fill="#32cd32"/>
<rect x="573" y="877" width="1" height="3" fill="#32cd32"/>
<rect x="584" y="879" width="1" height="3" fill="#32cd32"/>
<rect x="590" y="879" width="1" height="6" fill="#32cd32"/>
<rect x="596" y="879" width="1" height="8" fill="#32cd32"/>
<rect x="602" y="879" width="1" height="10" fill="#32cd32"/>
<rect x="607" y="879" width="1" height="11" fill="#32cd32"/>
<rect x="613" y="879" width="1" height="13" fill="#32cd32"/>
<rect x="619" y="879" width="1" height="14" fill="#32cd32"/>
<rect x="625" y="879" width="1" height="15" fill="#32cd32"/>
<rect x="630" y="879" width="1" height="16" fill="#32cd32"/>
<rect x="636" y="879" width="1" height="18" fill="#32cd32"/>
<rect x="642" y="879" width="1" height="19" fill="#32cd32"/>
<rect x="648" y="879" width="1" height="21" fill="#32cd32"/>
<rect x="654" y="879" width="1" height="23" fill="#32cd32"/>
<rect x="659" y="879" width="1" height="24" fill="#32cd32"/>
<rect x="665" y="879" width="1" height="25" fill="#32cd32"/>
<rect x="671" y="879" width="1" height="26" fill="#32cd32"/>
<rect x="677" y="879" width="1" height="27" fill="#32cd32"/>
<rect x="682" y="879" width="1" height="28" fill="#32cd32"/>
<rect x="688" y="879" width="1" height="29" fill="#32cd32"/>
<rect x="694" y="879" width="1" height="30" fill="#32cd32"/>
<rect x="700" y="879" width="1" height="31" fill="#32cd32"/>
<rect x="706" y="879" width="1" height="32" fill="#32cd32"/>
<rect x="711" y="879" width="1" height="32" fill="#32cd32"/>
<rect x="717" y="879" width="1" height="33" fill="#32cd32"/>
<rect x="723" y="879" width="1" height="34" fill="#32cd32"/>
<rect x="729" y="879" width="1" height="35" fill="#32cd32"/>
<rect x="734" y="879" width="1" height="35" fill="#32cd32"/>
<rect x="175" y="879" width="561" height="1" fill="#ff3232"/>
<rect x="175" y="831" width="1" height="99" fill="#fff"/>
</svg>
<div style="left:742px;top:812px;width:25px;height:15px;background:#aeb2c3;"></div>
<div style="left:742px;top:812px;width:25px;height:1px;background:#e8eaf0;"></div>
<div style="left:742px;top:812px;width:1px;height:15px;background:#e8eaf0;"></div>
<div style="left:742px;top:826px;width:25px;height:1px;background:#63667a;"></div>
<div style="left:766px;top:812px;width:1px;height:15px;background:#63667a;"></div>
<div style="left:746px;top:822px;width:2px;height:2px;background:#000;"></div>
<div style="left:752px;top:822px;width:2px;height:2px;background:#000;"></div>
<div style="left:758px;top:822px;width:2px;height:2px;background:#000;"></div>
<div style="left:741px;top:829px;width:212px;height:16px;background:#c1c1c1;"></div>
<div style="left:741px;top:829px;width:212px;height:1px;background:#ececec;"></div>
<div style="left:741px;top:829px;width:1px;height:16px;background:#ececec;"></div>
<div style="left:741px;top:844px;width:212px;height:1px;background:#707070;"></div>
<div style="left:952px;top:829px;width:1px;height:16px;background:#707070;"></div>
<span style="left:742px;top:829px;font-family:'Liberation Mono';font-weight:bold;font-size:16.67px;line-height:16px;color:#6a5acd">...ut_demodout.10.sig</span>
<span style="left:742px;top:846.25px;font-family:'Liberation Mono';font-weight:bold;font-size:16.67px;line-height:16px;color:#111">Fxp attr. = <span style="position:static;color:#6a5acd">&lt;12,4,t&gt;</span></span>
<span style="left:742px;top:862.9px;font-family:'Liberation Mono';font-weight:bold;font-size:16.67px;line-height:16px;color:#111"># Pts  = <span style="position:static;color:#6a5acd">1000</span></span>
<span style="left:742px;top:880.8px;font-family:'Liberation Mono';font-weight:bold;font-size:16.67px;line-height:16px;color:#111">Point# = <span style="position:static;color:#6a5acd">162</span></span>
<span style="left:742px;top:896.5px;font-family:'Liberation Mono';font-weight:bold;font-size:16.67px;line-height:16px;color:#111">Time   = <span style="position:static;color:#6a5acd">162 sec</span></span>
<span style="left:742px;top:914.0px;font-family:'Liberation Mono';font-weight:bold;font-size:16.67px;line-height:16px;color:#111">Value  = <span style="position:static;color:#6a5acd">6.56e-01</span></span>
</body></html>
